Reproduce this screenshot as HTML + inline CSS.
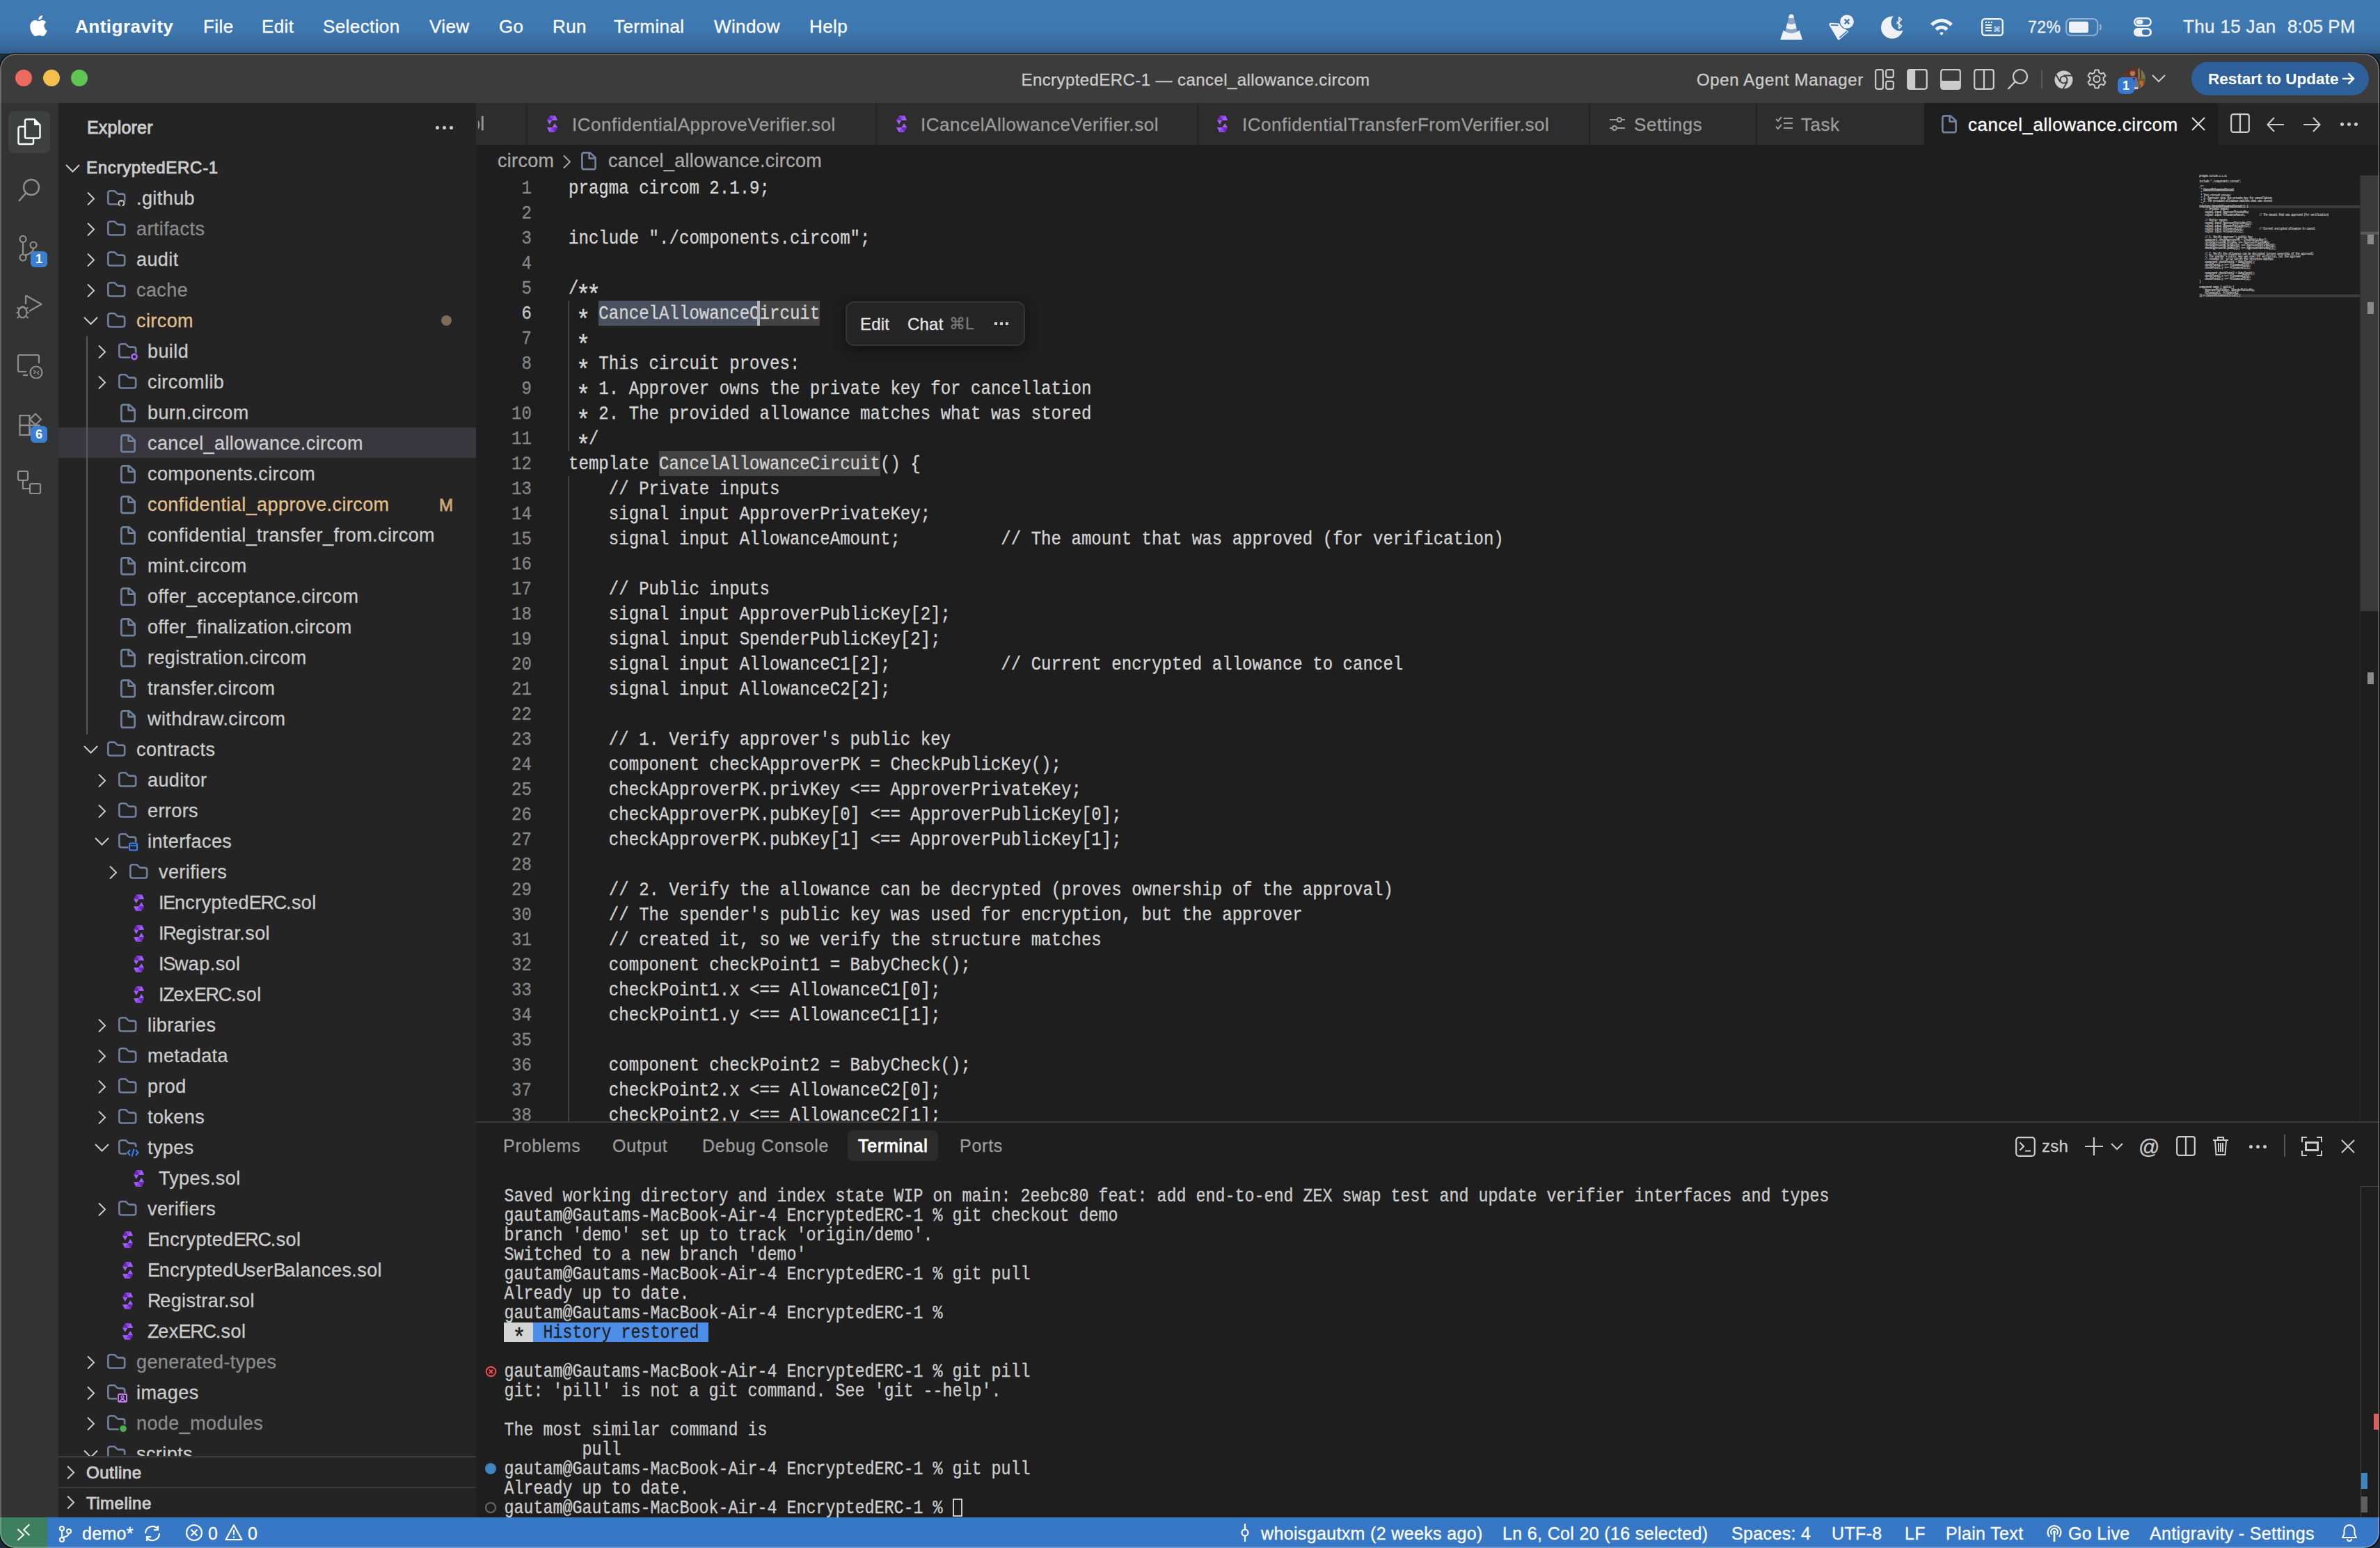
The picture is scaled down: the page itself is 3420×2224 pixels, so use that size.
<!DOCTYPE html><html><head><meta charset="utf-8"><style>html,body{margin:0;padding:0;}body{width:3420px;height:2224px;position:relative;overflow:hidden;background:#1a2c40;font-family:'Liberation Sans', sans-serif;}div,svg{box-sizing:border-box;}</style></head><body>
<div style="position:absolute;left:0;top:0;width:3420px;height:77px;background:linear-gradient(#407ab3 0%,#3e78b0 55%,#386a9e 86%,#2f5a88 100%);"></div>
<svg style="position:absolute;left:40px;top:20px;" width="28" height="33" viewBox="0 0 28 33" fill="none"><path fill="#fff" d="M23.2 17.5c0-3.6 3-5.4 3.1-5.5-1.7-2.5-4.3-2.8-5.3-2.9-2.2-.2-4.4 1.3-5.5 1.3-1.2 0-2.9-1.3-4.8-1.3C8.2 9.2 5.8 10.7 4.5 13c-2.7 4.6-.7 11.4 1.9 15.2 1.3 1.8 2.8 3.9 4.8 3.8 1.9-.1 2.7-1.2 5-1.2s3 1.2 5 1.2 3.3-1.9 4.5-3.7c1.4-2.1 2-4.1 2-4.2 0 0-3.9-1.5-4-6zM19.6 6.5c1-1.2 1.7-2.9 1.5-4.6-1.5.1-3.3 1-4.3 2.2-.9 1.1-1.8 2.8-1.5 4.5 1.6.1 3.3-.9 4.3-2.1z"/></svg>
<div style="position:absolute;left:108px;top:21.5px;height:33px;line-height:33px;font-size:26px;color:#fff;font-weight:700;letter-spacing:0.5px;white-space:pre;">Antigravity</div>
<div style="position:absolute;left:292px;top:21.5px;height:33px;line-height:33px;font-size:26px;color:#fff;font-weight:400;letter-spacing:0.4px;white-space:pre;-webkit-text-stroke:0.3px currentColor;">File</div>
<div style="position:absolute;left:376px;top:21.5px;height:33px;line-height:33px;font-size:26px;color:#fff;font-weight:400;letter-spacing:0.4px;white-space:pre;-webkit-text-stroke:0.3px currentColor;">Edit</div>
<div style="position:absolute;left:464px;top:21.5px;height:33px;line-height:33px;font-size:26px;color:#fff;font-weight:400;letter-spacing:0.4px;white-space:pre;-webkit-text-stroke:0.3px currentColor;">Selection</div>
<div style="position:absolute;left:617px;top:21.5px;height:33px;line-height:33px;font-size:26px;color:#fff;font-weight:400;letter-spacing:0.4px;white-space:pre;-webkit-text-stroke:0.3px currentColor;">View</div>
<div style="position:absolute;left:717px;top:21.5px;height:33px;line-height:33px;font-size:26px;color:#fff;font-weight:400;letter-spacing:0.4px;white-space:pre;-webkit-text-stroke:0.3px currentColor;">Go</div>
<div style="position:absolute;left:794px;top:21.5px;height:33px;line-height:33px;font-size:26px;color:#fff;font-weight:400;letter-spacing:0.4px;white-space:pre;-webkit-text-stroke:0.3px currentColor;">Run</div>
<div style="position:absolute;left:882px;top:21.5px;height:33px;line-height:33px;font-size:26px;color:#fff;font-weight:400;letter-spacing:0.4px;white-space:pre;-webkit-text-stroke:0.3px currentColor;">Terminal</div>
<div style="position:absolute;left:1026px;top:21.5px;height:33px;line-height:33px;font-size:26px;color:#fff;font-weight:400;letter-spacing:0.4px;white-space:pre;-webkit-text-stroke:0.3px currentColor;">Window</div>
<div style="position:absolute;left:1163px;top:21.5px;height:33px;line-height:33px;font-size:26px;color:#fff;font-weight:400;letter-spacing:0.4px;white-space:pre;-webkit-text-stroke:0.3px currentColor;">Help</div>
<div style="position:absolute;left:-2px;top:75.5px;width:3423px;height:2150px;border-radius:24px;background:#0c0c0c;"></div>
<div style="position:absolute;left:0;top:0;width:3420px;height:2224px;clip-path:inset(77px 1px 0px 0px round 22px);">
<div style="position:absolute;left:0px;top:77px;width:3420px;height:71px;background:#3c3c3c;"></div>
<div style="position:absolute;left:0px;top:77px;width:3420px;height:1px;background:#111111;"></div>
<div style="position:absolute;left:22px;top:100px;width:24px;height:24px;border-radius:50%;background:#ed6a5e;"></div>
<div style="position:absolute;left:62px;top:100px;width:24px;height:24px;border-radius:50%;background:#f5bf4f;"></div>
<div style="position:absolute;left:102px;top:100px;width:24px;height:24px;border-radius:50%;background:#61c554;"></div>
<div style="position:absolute;left:1718px;transform:translateX(-50%);top:98.5px;height:31px;line-height:31px;font-size:24px;color:#cccccc;font-weight:400;letter-spacing:0.42px;white-space:pre;-webkit-text-stroke:0.3px currentColor;">EncryptedERC-1 — cancel_allowance.circom</div>
<div style="position:absolute;left:0px;top:148px;width:84px;height:2032px;background:#333333;"></div>
<div style="position:absolute;left:84px;top:148px;width:600px;height:2032px;background:#242424;"></div>
<div style="position:absolute;left:684px;top:148px;width:2736px;height:60px;background:#252525;"></div>
<div style="position:absolute;left:684px;top:208px;width:2736px;height:1403px;background:#1e1e1e;"></div>
<div style="position:absolute;left:684px;top:1611px;width:2736px;height:569px;background:#1e1e1e;"></div>
<div style="position:absolute;left:684px;top:1611px;width:2736px;height:2px;background:#3a3a3a;"></div>
<div style="position:absolute;left:0px;top:2180px;width:3420px;height:44px;background:#3677c6;"></div>
<div style="position:absolute;left:0px;top:2180px;width:68px;height:44px;background:#3e7f60;"></div>
<div style="position:absolute;left:125px;top:167.0px;height:32px;line-height:32px;font-size:25px;color:#cccccc;font-weight:400;letter-spacing:0.2px;white-space:pre;-webkit-text-stroke:0.9px currentColor;">Explorer</div>
<div style="position:absolute;left:626px;top:181px;width:4.5px;height:4.5px;border-radius:50%;background:#cccccc"></div>
<div style="position:absolute;left:636px;top:181px;width:4.5px;height:4.5px;border-radius:50%;background:#cccccc"></div>
<div style="position:absolute;left:646px;top:181px;width:4.5px;height:4.5px;border-radius:50%;background:#cccccc"></div>
<svg style="position:absolute;left:94px;top:236px;" width="21" height="12" viewBox="0 0 21 12" fill="none"><polyline points="1,1 10.5,10.5 20,1" stroke="#cccccc" stroke-width="2"/></svg>
<div style="position:absolute;left:124px;top:224.5px;height:31px;line-height:31px;font-size:24px;color:#cccccc;font-weight:400;letter-spacing:0.7px;white-space:pre;-webkit-text-stroke:0.9px currentColor;">EncryptedERC-1</div>
<div style="position:absolute;left:84px;top:0;width:600px;height:2093px;overflow:hidden;">
</div>
<div style="position:absolute;left:0;top:0;width:3420px;height:2093px;clip-path:inset(148px 0 0 0);"><svg style="position:absolute;left:125px;top:275px;" width="12" height="21" viewBox="0 0 12 21" fill="none"><polyline points="1,1.5 10,10.5 1,19.5" stroke="#cccccc" stroke-width="2"/></svg><svg style="position:absolute;left:154px;top:273px;" width="30" height="26" viewBox="0 0 30 26" fill="none"><path d="M1.3 4.6 Q1.3 1.3 4.6 1.3 H9.5 Q10.8 1.3 11.8 2.3 L14 4.6 Q15 5.6 16.3 5.6 H21.9 Q25.2 5.6 25.2 8.9 V17.2 Q25.2 20.5 21.9 20.5 H4.6 Q1.3 20.5 1.3 17.2 Z" stroke="#71819c" stroke-width="2.6"/><circle cx="20.5" cy="19" r="5.6" fill="#242424"/><path d="M20.5 14.2a4.8 4.8 0 0 0-1.5 9.4c.2 0 .3-.1.3-.2v-.9c-1.3.3-1.6-.6-1.6-.6-.2-.6-.5-.7-.5-.7-.4-.3 0-.3 0-.3.5 0 .7.5.7.5.4.7 1.1.5 1.4.4 0-.3.2-.5.3-.6-1.1-.1-2.2-.5-2.2-2.3 0-.5.2-1 .5-1.3 0-.1-.2-.6 0-1.3 0 0 .4-.1 1.3.5a4.5 4.5 0 0 1 2.4 0c.9-.6 1.3-.5 1.3-.5.3.7.1 1.2 0 1.3.3.4.5.8.5 1.3 0 1.8-1.1 2.2-2.2 2.3.2.2.3.5.3.9v1.3c0 .1.1.3.3.2a4.8 4.8 0 0 0-1.5-9.4z" fill="#cccccc"/></svg><div style="position:absolute;left:196px;top:267.5px;height:35px;line-height:35px;font-size:27px;color:#cccccc;font-weight:400;letter-spacing:0.42px;white-space:pre;-webkit-text-stroke:0.3px currentColor;">.github</div><svg style="position:absolute;left:125px;top:319px;" width="12" height="21" viewBox="0 0 12 21" fill="none"><polyline points="1,1.5 10,10.5 1,19.5" stroke="#cccccc" stroke-width="2"/></svg><svg style="position:absolute;left:154px;top:317px;" width="30" height="26" viewBox="0 0 30 26" fill="none"><path d="M1.3 4.6 Q1.3 1.3 4.6 1.3 H9.5 Q10.8 1.3 11.8 2.3 L14 4.6 Q15 5.6 16.3 5.6 H21.9 Q25.2 5.6 25.2 8.9 V17.2 Q25.2 20.5 21.9 20.5 H4.6 Q1.3 20.5 1.3 17.2 Z" stroke="#71819c" stroke-width="2.6"/></svg><div style="position:absolute;left:196px;top:311.5px;height:35px;line-height:35px;font-size:27px;color:#8b8b8b;font-weight:400;letter-spacing:0.42px;white-space:pre;-webkit-text-stroke:0.3px currentColor;">artifacts</div><svg style="position:absolute;left:125px;top:363px;" width="12" height="21" viewBox="0 0 12 21" fill="none"><polyline points="1,1.5 10,10.5 1,19.5" stroke="#cccccc" stroke-width="2"/></svg><svg style="position:absolute;left:154px;top:361px;" width="30" height="26" viewBox="0 0 30 26" fill="none"><path d="M1.3 4.6 Q1.3 1.3 4.6 1.3 H9.5 Q10.8 1.3 11.8 2.3 L14 4.6 Q15 5.6 16.3 5.6 H21.9 Q25.2 5.6 25.2 8.9 V17.2 Q25.2 20.5 21.9 20.5 H4.6 Q1.3 20.5 1.3 17.2 Z" stroke="#71819c" stroke-width="2.6"/></svg><div style="position:absolute;left:196px;top:355.5px;height:35px;line-height:35px;font-size:27px;color:#cccccc;font-weight:400;letter-spacing:0.42px;white-space:pre;-webkit-text-stroke:0.3px currentColor;">audit</div><svg style="position:absolute;left:125px;top:407px;" width="12" height="21" viewBox="0 0 12 21" fill="none"><polyline points="1,1.5 10,10.5 1,19.5" stroke="#cccccc" stroke-width="2"/></svg><svg style="position:absolute;left:154px;top:405px;" width="30" height="26" viewBox="0 0 30 26" fill="none"><path d="M1.3 4.6 Q1.3 1.3 4.6 1.3 H9.5 Q10.8 1.3 11.8 2.3 L14 4.6 Q15 5.6 16.3 5.6 H21.9 Q25.2 5.6 25.2 8.9 V17.2 Q25.2 20.5 21.9 20.5 H4.6 Q1.3 20.5 1.3 17.2 Z" stroke="#71819c" stroke-width="2.6"/></svg><div style="position:absolute;left:196px;top:399.5px;height:35px;line-height:35px;font-size:27px;color:#8b8b8b;font-weight:400;letter-spacing:0.42px;white-space:pre;-webkit-text-stroke:0.3px currentColor;">cache</div><svg style="position:absolute;left:120px;top:455px;" width="21" height="12" viewBox="0 0 21 12" fill="none"><polyline points="1,1 10.5,10.5 20,1" stroke="#cccccc" stroke-width="2"/></svg><svg style="position:absolute;left:154px;top:449px;" width="30" height="26" viewBox="0 0 30 26" fill="none"><path d="M1.3 4.6 Q1.3 1.3 4.6 1.3 H9.5 Q10.8 1.3 11.8 2.3 L14 4.6 Q15 5.6 16.3 5.6 H21.9 Q25.2 5.6 25.2 8.9 V17.2 Q25.2 20.5 21.9 20.5 H4.6 Q1.3 20.5 1.3 17.2 Z" stroke="#71819c" stroke-width="2.6"/></svg><div style="position:absolute;left:196px;top:443.5px;height:35px;line-height:35px;font-size:27px;color:#e2c08d;font-weight:400;letter-spacing:0.42px;white-space:pre;-webkit-text-stroke:0.3px currentColor;">circom</div><div style="position:absolute;left:634px;top:453px;width:15px;height:15px;border-radius:50%;background:#7c6c58"></div><svg style="position:absolute;left:141px;top:495px;" width="12" height="21" viewBox="0 0 12 21" fill="none"><polyline points="1,1.5 10,10.5 1,19.5" stroke="#cccccc" stroke-width="2"/></svg><svg style="position:absolute;left:170px;top:493px;" width="30" height="26" viewBox="0 0 30 26" fill="none"><path d="M1.3 4.6 Q1.3 1.3 4.6 1.3 H9.5 Q10.8 1.3 11.8 2.3 L14 4.6 Q15 5.6 16.3 5.6 H21.9 Q25.2 5.6 25.2 8.9 V17.2 Q25.2 20.5 21.9 20.5 H4.6 Q1.3 20.5 1.3 17.2 Z" stroke="#71819c" stroke-width="2.6"/><circle cx="23" cy="19.5" r="6" fill="#242424"/><circle cx="23" cy="19.5" r="3.6" stroke="#9a6cf0" stroke-width="2.6"/></svg><div style="position:absolute;left:212px;top:487.5px;height:35px;line-height:35px;font-size:27px;color:#cccccc;font-weight:400;letter-spacing:0.42px;white-space:pre;-webkit-text-stroke:0.3px currentColor;">build</div><svg style="position:absolute;left:141px;top:539px;" width="12" height="21" viewBox="0 0 12 21" fill="none"><polyline points="1,1.5 10,10.5 1,19.5" stroke="#cccccc" stroke-width="2"/></svg><svg style="position:absolute;left:170px;top:537px;" width="30" height="26" viewBox="0 0 30 26" fill="none"><path d="M1.3 4.6 Q1.3 1.3 4.6 1.3 H9.5 Q10.8 1.3 11.8 2.3 L14 4.6 Q15 5.6 16.3 5.6 H21.9 Q25.2 5.6 25.2 8.9 V17.2 Q25.2 20.5 21.9 20.5 H4.6 Q1.3 20.5 1.3 17.2 Z" stroke="#71819c" stroke-width="2.6"/></svg><div style="position:absolute;left:212px;top:531.5px;height:35px;line-height:35px;font-size:27px;color:#cccccc;font-weight:400;letter-spacing:0.42px;white-space:pre;-webkit-text-stroke:0.3px currentColor;">circomlib</div><svg style="position:absolute;left:173px;top:580px;" width="22" height="27" viewBox="0 0 22 27" fill="none"><path d="M4.4 1.4 H12.8 L20.6 8.6 V22.4 Q20.6 25.2 17.8 25.2 H4.2 Q1.4 25.2 1.4 22.4 V4.4 Q1.4 1.4 4.4 1.4 Z M11.6 1.4 V9.6 H20.6" stroke="#71819c" stroke-width="2.7" stroke-linejoin="round"/></svg><div style="position:absolute;left:212px;top:575.5px;height:35px;line-height:35px;font-size:27px;color:#cccccc;font-weight:400;letter-spacing:0.42px;white-space:pre;-webkit-text-stroke:0.3px currentColor;">burn.circom</div><div style="position:absolute;left:84px;top:614px;width:600px;height:44px;background:#37373d;"></div><svg style="position:absolute;left:173px;top:624px;" width="22" height="27" viewBox="0 0 22 27" fill="none"><path d="M4.4 1.4 H12.8 L20.6 8.6 V22.4 Q20.6 25.2 17.8 25.2 H4.2 Q1.4 25.2 1.4 22.4 V4.4 Q1.4 1.4 4.4 1.4 Z M11.6 1.4 V9.6 H20.6" stroke="#71819c" stroke-width="2.7" stroke-linejoin="round"/></svg><div style="position:absolute;left:212px;top:619.5px;height:35px;line-height:35px;font-size:27px;color:#cccccc;font-weight:400;letter-spacing:0.42px;white-space:pre;-webkit-text-stroke:0.3px currentColor;">cancel_allowance.circom</div><svg style="position:absolute;left:173px;top:668px;" width="22" height="27" viewBox="0 0 22 27" fill="none"><path d="M4.4 1.4 H12.8 L20.6 8.6 V22.4 Q20.6 25.2 17.8 25.2 H4.2 Q1.4 25.2 1.4 22.4 V4.4 Q1.4 1.4 4.4 1.4 Z M11.6 1.4 V9.6 H20.6" stroke="#71819c" stroke-width="2.7" stroke-linejoin="round"/></svg><div style="position:absolute;left:212px;top:663.5px;height:35px;line-height:35px;font-size:27px;color:#cccccc;font-weight:400;letter-spacing:0.42px;white-space:pre;-webkit-text-stroke:0.3px currentColor;">components.circom</div><svg style="position:absolute;left:173px;top:712px;" width="22" height="27" viewBox="0 0 22 27" fill="none"><path d="M4.4 1.4 H12.8 L20.6 8.6 V22.4 Q20.6 25.2 17.8 25.2 H4.2 Q1.4 25.2 1.4 22.4 V4.4 Q1.4 1.4 4.4 1.4 Z M11.6 1.4 V9.6 H20.6" stroke="#71819c" stroke-width="2.7" stroke-linejoin="round"/></svg><div style="position:absolute;left:212px;top:707.5px;height:35px;line-height:35px;font-size:27px;color:#e2c08d;font-weight:400;letter-spacing:0.42px;white-space:pre;-webkit-text-stroke:0.3px currentColor;">confidential_approve.circom</div><div style="position:absolute;left:631px;top:709.5px;height:31px;line-height:31px;font-size:24px;color:#c9a77a;font-weight:400;letter-spacing:0px;white-space:pre;-webkit-text-stroke:0.9px currentColor;">M</div><svg style="position:absolute;left:173px;top:756px;" width="22" height="27" viewBox="0 0 22 27" fill="none"><path d="M4.4 1.4 H12.8 L20.6 8.6 V22.4 Q20.6 25.2 17.8 25.2 H4.2 Q1.4 25.2 1.4 22.4 V4.4 Q1.4 1.4 4.4 1.4 Z M11.6 1.4 V9.6 H20.6" stroke="#71819c" stroke-width="2.7" stroke-linejoin="round"/></svg><div style="position:absolute;left:212px;top:751.5px;height:35px;line-height:35px;font-size:27px;color:#cccccc;font-weight:400;letter-spacing:0.42px;white-space:pre;-webkit-text-stroke:0.3px currentColor;">confidential_transfer_from.circom</div><svg style="position:absolute;left:173px;top:800px;" width="22" height="27" viewBox="0 0 22 27" fill="none"><path d="M4.4 1.4 H12.8 L20.6 8.6 V22.4 Q20.6 25.2 17.8 25.2 H4.2 Q1.4 25.2 1.4 22.4 V4.4 Q1.4 1.4 4.4 1.4 Z M11.6 1.4 V9.6 H20.6" stroke="#71819c" stroke-width="2.7" stroke-linejoin="round"/></svg><div style="position:absolute;left:212px;top:795.5px;height:35px;line-height:35px;font-size:27px;color:#cccccc;font-weight:400;letter-spacing:0.42px;white-space:pre;-webkit-text-stroke:0.3px currentColor;">mint.circom</div><svg style="position:absolute;left:173px;top:844px;" width="22" height="27" viewBox="0 0 22 27" fill="none"><path d="M4.4 1.4 H12.8 L20.6 8.6 V22.4 Q20.6 25.2 17.8 25.2 H4.2 Q1.4 25.2 1.4 22.4 V4.4 Q1.4 1.4 4.4 1.4 Z M11.6 1.4 V9.6 H20.6" stroke="#71819c" stroke-width="2.7" stroke-linejoin="round"/></svg><div style="position:absolute;left:212px;top:839.5px;height:35px;line-height:35px;font-size:27px;color:#cccccc;font-weight:400;letter-spacing:0.42px;white-space:pre;-webkit-text-stroke:0.3px currentColor;">offer_acceptance.circom</div><svg style="position:absolute;left:173px;top:888px;" width="22" height="27" viewBox="0 0 22 27" fill="none"><path d="M4.4 1.4 H12.8 L20.6 8.6 V22.4 Q20.6 25.2 17.8 25.2 H4.2 Q1.4 25.2 1.4 22.4 V4.4 Q1.4 1.4 4.4 1.4 Z M11.6 1.4 V9.6 H20.6" stroke="#71819c" stroke-width="2.7" stroke-linejoin="round"/></svg><div style="position:absolute;left:212px;top:883.5px;height:35px;line-height:35px;font-size:27px;color:#cccccc;font-weight:400;letter-spacing:0.42px;white-space:pre;-webkit-text-stroke:0.3px currentColor;">offer_finalization.circom</div><svg style="position:absolute;left:173px;top:932px;" width="22" height="27" viewBox="0 0 22 27" fill="none"><path d="M4.4 1.4 H12.8 L20.6 8.6 V22.4 Q20.6 25.2 17.8 25.2 H4.2 Q1.4 25.2 1.4 22.4 V4.4 Q1.4 1.4 4.4 1.4 Z M11.6 1.4 V9.6 H20.6" stroke="#71819c" stroke-width="2.7" stroke-linejoin="round"/></svg><div style="position:absolute;left:212px;top:927.5px;height:35px;line-height:35px;font-size:27px;color:#cccccc;font-weight:400;letter-spacing:0.42px;white-space:pre;-webkit-text-stroke:0.3px currentColor;">registration.circom</div><svg style="position:absolute;left:173px;top:976px;" width="22" height="27" viewBox="0 0 22 27" fill="none"><path d="M4.4 1.4 H12.8 L20.6 8.6 V22.4 Q20.6 25.2 17.8 25.2 H4.2 Q1.4 25.2 1.4 22.4 V4.4 Q1.4 1.4 4.4 1.4 Z M11.6 1.4 V9.6 H20.6" stroke="#71819c" stroke-width="2.7" stroke-linejoin="round"/></svg><div style="position:absolute;left:212px;top:971.5px;height:35px;line-height:35px;font-size:27px;color:#cccccc;font-weight:400;letter-spacing:0.42px;white-space:pre;-webkit-text-stroke:0.3px currentColor;">transfer.circom</div><svg style="position:absolute;left:173px;top:1020px;" width="22" height="27" viewBox="0 0 22 27" fill="none"><path d="M4.4 1.4 H12.8 L20.6 8.6 V22.4 Q20.6 25.2 17.8 25.2 H4.2 Q1.4 25.2 1.4 22.4 V4.4 Q1.4 1.4 4.4 1.4 Z M11.6 1.4 V9.6 H20.6" stroke="#71819c" stroke-width="2.7" stroke-linejoin="round"/></svg><div style="position:absolute;left:212px;top:1015.5px;height:35px;line-height:35px;font-size:27px;color:#cccccc;font-weight:400;letter-spacing:0.42px;white-space:pre;-webkit-text-stroke:0.3px currentColor;">withdraw.circom</div><svg style="position:absolute;left:120px;top:1071px;" width="21" height="12" viewBox="0 0 21 12" fill="none"><polyline points="1,1 10.5,10.5 20,1" stroke="#cccccc" stroke-width="2"/></svg><svg style="position:absolute;left:154px;top:1065px;" width="30" height="26" viewBox="0 0 30 26" fill="none"><path d="M1.3 4.6 Q1.3 1.3 4.6 1.3 H9.5 Q10.8 1.3 11.8 2.3 L14 4.6 Q15 5.6 16.3 5.6 H21.9 Q25.2 5.6 25.2 8.9 V17.2 Q25.2 20.5 21.9 20.5 H4.6 Q1.3 20.5 1.3 17.2 Z" stroke="#71819c" stroke-width="2.6"/></svg><div style="position:absolute;left:196px;top:1059.5px;height:35px;line-height:35px;font-size:27px;color:#cccccc;font-weight:400;letter-spacing:0.42px;white-space:pre;-webkit-text-stroke:0.3px currentColor;">contracts</div><svg style="position:absolute;left:141px;top:1111px;" width="12" height="21" viewBox="0 0 12 21" fill="none"><polyline points="1,1.5 10,10.5 1,19.5" stroke="#cccccc" stroke-width="2"/></svg><svg style="position:absolute;left:170px;top:1109px;" width="30" height="26" viewBox="0 0 30 26" fill="none"><path d="M1.3 4.6 Q1.3 1.3 4.6 1.3 H9.5 Q10.8 1.3 11.8 2.3 L14 4.6 Q15 5.6 16.3 5.6 H21.9 Q25.2 5.6 25.2 8.9 V17.2 Q25.2 20.5 21.9 20.5 H4.6 Q1.3 20.5 1.3 17.2 Z" stroke="#71819c" stroke-width="2.6"/></svg><div style="position:absolute;left:212px;top:1103.5px;height:35px;line-height:35px;font-size:27px;color:#cccccc;font-weight:400;letter-spacing:0.42px;white-space:pre;-webkit-text-stroke:0.3px currentColor;">auditor</div><svg style="position:absolute;left:141px;top:1155px;" width="12" height="21" viewBox="0 0 12 21" fill="none"><polyline points="1,1.5 10,10.5 1,19.5" stroke="#cccccc" stroke-width="2"/></svg><svg style="position:absolute;left:170px;top:1153px;" width="30" height="26" viewBox="0 0 30 26" fill="none"><path d="M1.3 4.6 Q1.3 1.3 4.6 1.3 H9.5 Q10.8 1.3 11.8 2.3 L14 4.6 Q15 5.6 16.3 5.6 H21.9 Q25.2 5.6 25.2 8.9 V17.2 Q25.2 20.5 21.9 20.5 H4.6 Q1.3 20.5 1.3 17.2 Z" stroke="#71819c" stroke-width="2.6"/></svg><div style="position:absolute;left:212px;top:1147.5px;height:35px;line-height:35px;font-size:27px;color:#cccccc;font-weight:400;letter-spacing:0.42px;white-space:pre;-webkit-text-stroke:0.3px currentColor;">errors</div><svg style="position:absolute;left:136px;top:1203px;" width="21" height="12" viewBox="0 0 21 12" fill="none"><polyline points="1,1 10.5,10.5 20,1" stroke="#cccccc" stroke-width="2"/></svg><svg style="position:absolute;left:170px;top:1197px;" width="30" height="26" viewBox="0 0 30 26" fill="none"><path d="M1.3 4.6 Q1.3 1.3 4.6 1.3 H9.5 Q10.8 1.3 11.8 2.3 L14 4.6 Q15 5.6 16.3 5.6 H21.9 Q25.2 5.6 25.2 8.9 V17.2 Q25.2 20.5 21.9 20.5 H4.6 Q1.3 20.5 1.3 17.2 Z" stroke="#71819c" stroke-width="2.6"/><rect x="14.5" y="13" width="14" height="13" fill="#242424"/><rect x="16" y="14.5" width="11" height="10" rx="1.5" stroke="#3b82f6" stroke-width="2"/><line x1="16" y1="18" x2="27" y2="18" stroke="#3b82f6" stroke-width="1.5"/></svg><div style="position:absolute;left:212px;top:1191.5px;height:35px;line-height:35px;font-size:27px;color:#cccccc;font-weight:400;letter-spacing:0.42px;white-space:pre;-webkit-text-stroke:0.3px currentColor;">interfaces</div><svg style="position:absolute;left:157px;top:1243px;" width="12" height="21" viewBox="0 0 12 21" fill="none"><polyline points="1,1.5 10,10.5 1,19.5" stroke="#cccccc" stroke-width="2"/></svg><svg style="position:absolute;left:186px;top:1241px;" width="30" height="26" viewBox="0 0 30 26" fill="none"><path d="M1.3 4.6 Q1.3 1.3 4.6 1.3 H9.5 Q10.8 1.3 11.8 2.3 L14 4.6 Q15 5.6 16.3 5.6 H21.9 Q25.2 5.6 25.2 8.9 V17.2 Q25.2 20.5 21.9 20.5 H4.6 Q1.3 20.5 1.3 17.2 Z" stroke="#71819c" stroke-width="2.6"/></svg><div style="position:absolute;left:228px;top:1235.5px;height:35px;line-height:35px;font-size:27px;color:#cccccc;font-weight:400;letter-spacing:0.42px;white-space:pre;-webkit-text-stroke:0.3px currentColor;">verifiers</div><svg style="position:absolute;left:192px;top:1285px;" width="15" height="24" viewBox="0 0 15 24" fill="none"><polygon points="4,0 11.8,0 15,6.8 7.3,6.8" fill="#8a45e0"/><polygon points="11.8,0 15,6.8 7.3,6.8" fill="#a35ef7"/><polygon points="4,0 7.3,6.8 0,6.6" fill="#6a2bbd"/><polygon points="0,6.6 7.3,6.8 3.8,13" fill="#a35ef7"/><polygon points="11.2,11 15,17.3 7.4,17.3" fill="#a35ef7"/><polygon points="0,17.3 15,17.3 11.3,24 3.7,24" fill="#8a45e0"/><polygon points="0,17.3 7.4,17.3 3.7,24" fill="#a35ef7"/><polygon points="7.4,17.3 15,17.3 11.3,24" fill="#6a2bbd"/></svg><div style="position:absolute;left:228px;top:1279.5px;height:35px;line-height:35px;font-size:27px;color:#cccccc;font-weight:400;letter-spacing:0.42px;white-space:pre;-webkit-text-stroke:0.3px currentColor;"><span style="letter-spacing:-1.3px">I</span><span style="letter-spacing:-1.3px">E</span>ncrypted<span style="letter-spacing:-1.3px">E</span><span style="letter-spacing:-1.3px">R</span><span style="letter-spacing:-1.3px">C</span>.sol</div><svg style="position:absolute;left:192px;top:1329px;" width="15" height="24" viewBox="0 0 15 24" fill="none"><polygon points="4,0 11.8,0 15,6.8 7.3,6.8" fill="#8a45e0"/><polygon points="11.8,0 15,6.8 7.3,6.8" fill="#a35ef7"/><polygon points="4,0 7.3,6.8 0,6.6" fill="#6a2bbd"/><polygon points="0,6.6 7.3,6.8 3.8,13" fill="#a35ef7"/><polygon points="11.2,11 15,17.3 7.4,17.3" fill="#a35ef7"/><polygon points="0,17.3 15,17.3 11.3,24 3.7,24" fill="#8a45e0"/><polygon points="0,17.3 7.4,17.3 3.7,24" fill="#a35ef7"/><polygon points="7.4,17.3 15,17.3 11.3,24" fill="#6a2bbd"/></svg><div style="position:absolute;left:228px;top:1323.5px;height:35px;line-height:35px;font-size:27px;color:#cccccc;font-weight:400;letter-spacing:0.42px;white-space:pre;-webkit-text-stroke:0.3px currentColor;"><span style="letter-spacing:-1.3px">I</span><span style="letter-spacing:-1.3px">R</span>egistrar.sol</div><svg style="position:absolute;left:192px;top:1373px;" width="15" height="24" viewBox="0 0 15 24" fill="none"><polygon points="4,0 11.8,0 15,6.8 7.3,6.8" fill="#8a45e0"/><polygon points="11.8,0 15,6.8 7.3,6.8" fill="#a35ef7"/><polygon points="4,0 7.3,6.8 0,6.6" fill="#6a2bbd"/><polygon points="0,6.6 7.3,6.8 3.8,13" fill="#a35ef7"/><polygon points="11.2,11 15,17.3 7.4,17.3" fill="#a35ef7"/><polygon points="0,17.3 15,17.3 11.3,24 3.7,24" fill="#8a45e0"/><polygon points="0,17.3 7.4,17.3 3.7,24" fill="#a35ef7"/><polygon points="7.4,17.3 15,17.3 11.3,24" fill="#6a2bbd"/></svg><div style="position:absolute;left:228px;top:1367.5px;height:35px;line-height:35px;font-size:27px;color:#cccccc;font-weight:400;letter-spacing:0.42px;white-space:pre;-webkit-text-stroke:0.3px currentColor;"><span style="letter-spacing:-1.3px">I</span><span style="letter-spacing:-1.3px">S</span>wap.sol</div><svg style="position:absolute;left:192px;top:1417px;" width="15" height="24" viewBox="0 0 15 24" fill="none"><polygon points="4,0 11.8,0 15,6.8 7.3,6.8" fill="#8a45e0"/><polygon points="11.8,0 15,6.8 7.3,6.8" fill="#a35ef7"/><polygon points="4,0 7.3,6.8 0,6.6" fill="#6a2bbd"/><polygon points="0,6.6 7.3,6.8 3.8,13" fill="#a35ef7"/><polygon points="11.2,11 15,17.3 7.4,17.3" fill="#a35ef7"/><polygon points="0,17.3 15,17.3 11.3,24 3.7,24" fill="#8a45e0"/><polygon points="0,17.3 7.4,17.3 3.7,24" fill="#a35ef7"/><polygon points="7.4,17.3 15,17.3 11.3,24" fill="#6a2bbd"/></svg><div style="position:absolute;left:228px;top:1411.5px;height:35px;line-height:35px;font-size:27px;color:#cccccc;font-weight:400;letter-spacing:0.42px;white-space:pre;-webkit-text-stroke:0.3px currentColor;"><span style="letter-spacing:-1.3px">I</span><span style="letter-spacing:-1.3px">Z</span>ex<span style="letter-spacing:-1.3px">E</span><span style="letter-spacing:-1.3px">R</span><span style="letter-spacing:-1.3px">C</span>.sol</div><svg style="position:absolute;left:141px;top:1463px;" width="12" height="21" viewBox="0 0 12 21" fill="none"><polyline points="1,1.5 10,10.5 1,19.5" stroke="#cccccc" stroke-width="2"/></svg><svg style="position:absolute;left:170px;top:1461px;" width="30" height="26" viewBox="0 0 30 26" fill="none"><path d="M1.3 4.6 Q1.3 1.3 4.6 1.3 H9.5 Q10.8 1.3 11.8 2.3 L14 4.6 Q15 5.6 16.3 5.6 H21.9 Q25.2 5.6 25.2 8.9 V17.2 Q25.2 20.5 21.9 20.5 H4.6 Q1.3 20.5 1.3 17.2 Z" stroke="#71819c" stroke-width="2.6"/></svg><div style="position:absolute;left:212px;top:1455.5px;height:35px;line-height:35px;font-size:27px;color:#cccccc;font-weight:400;letter-spacing:0.42px;white-space:pre;-webkit-text-stroke:0.3px currentColor;">libraries</div><svg style="position:absolute;left:141px;top:1507px;" width="12" height="21" viewBox="0 0 12 21" fill="none"><polyline points="1,1.5 10,10.5 1,19.5" stroke="#cccccc" stroke-width="2"/></svg><svg style="position:absolute;left:170px;top:1505px;" width="30" height="26" viewBox="0 0 30 26" fill="none"><path d="M1.3 4.6 Q1.3 1.3 4.6 1.3 H9.5 Q10.8 1.3 11.8 2.3 L14 4.6 Q15 5.6 16.3 5.6 H21.9 Q25.2 5.6 25.2 8.9 V17.2 Q25.2 20.5 21.9 20.5 H4.6 Q1.3 20.5 1.3 17.2 Z" stroke="#71819c" stroke-width="2.6"/></svg><div style="position:absolute;left:212px;top:1499.5px;height:35px;line-height:35px;font-size:27px;color:#cccccc;font-weight:400;letter-spacing:0.42px;white-space:pre;-webkit-text-stroke:0.3px currentColor;">metadata</div><svg style="position:absolute;left:141px;top:1551px;" width="12" height="21" viewBox="0 0 12 21" fill="none"><polyline points="1,1.5 10,10.5 1,19.5" stroke="#cccccc" stroke-width="2"/></svg><svg style="position:absolute;left:170px;top:1549px;" width="30" height="26" viewBox="0 0 30 26" fill="none"><path d="M1.3 4.6 Q1.3 1.3 4.6 1.3 H9.5 Q10.8 1.3 11.8 2.3 L14 4.6 Q15 5.6 16.3 5.6 H21.9 Q25.2 5.6 25.2 8.9 V17.2 Q25.2 20.5 21.9 20.5 H4.6 Q1.3 20.5 1.3 17.2 Z" stroke="#71819c" stroke-width="2.6"/></svg><div style="position:absolute;left:212px;top:1543.5px;height:35px;line-height:35px;font-size:27px;color:#cccccc;font-weight:400;letter-spacing:0.42px;white-space:pre;-webkit-text-stroke:0.3px currentColor;">prod</div><svg style="position:absolute;left:141px;top:1595px;" width="12" height="21" viewBox="0 0 12 21" fill="none"><polyline points="1,1.5 10,10.5 1,19.5" stroke="#cccccc" stroke-width="2"/></svg><svg style="position:absolute;left:170px;top:1593px;" width="30" height="26" viewBox="0 0 30 26" fill="none"><path d="M1.3 4.6 Q1.3 1.3 4.6 1.3 H9.5 Q10.8 1.3 11.8 2.3 L14 4.6 Q15 5.6 16.3 5.6 H21.9 Q25.2 5.6 25.2 8.9 V17.2 Q25.2 20.5 21.9 20.5 H4.6 Q1.3 20.5 1.3 17.2 Z" stroke="#71819c" stroke-width="2.6"/></svg><div style="position:absolute;left:212px;top:1587.5px;height:35px;line-height:35px;font-size:27px;color:#cccccc;font-weight:400;letter-spacing:0.42px;white-space:pre;-webkit-text-stroke:0.3px currentColor;">tokens</div><svg style="position:absolute;left:136px;top:1643px;" width="21" height="12" viewBox="0 0 21 12" fill="none"><polyline points="1,1 10.5,10.5 20,1" stroke="#cccccc" stroke-width="2"/></svg><svg style="position:absolute;left:170px;top:1637px;" width="30" height="26" viewBox="0 0 30 26" fill="none"><path d="M1.3 4.6 Q1.3 1.3 4.6 1.3 H9.5 Q10.8 1.3 11.8 2.3 L14 4.6 Q15 5.6 16.3 5.6 H21.9 Q25.2 5.6 25.2 8.9 V17.2 Q25.2 20.5 21.9 20.5 H4.6 Q1.3 20.5 1.3 17.2 Z" stroke="#71819c" stroke-width="2.6"/><rect x="12" y="11" width="18" height="15" fill="#242424"/><path d="M17 15 L13.5 19 L17 23 M25 15 L28.5 19 L25 23 M22.5 13.5 L19.5 24.5" stroke="#3b82f6" stroke-width="2"/></svg><div style="position:absolute;left:212px;top:1631.5px;height:35px;line-height:35px;font-size:27px;color:#cccccc;font-weight:400;letter-spacing:0.42px;white-space:pre;-webkit-text-stroke:0.3px currentColor;">types</div><svg style="position:absolute;left:192px;top:1681px;" width="15" height="24" viewBox="0 0 15 24" fill="none"><polygon points="4,0 11.8,0 15,6.8 7.3,6.8" fill="#8a45e0"/><polygon points="11.8,0 15,6.8 7.3,6.8" fill="#a35ef7"/><polygon points="4,0 7.3,6.8 0,6.6" fill="#6a2bbd"/><polygon points="0,6.6 7.3,6.8 3.8,13" fill="#a35ef7"/><polygon points="11.2,11 15,17.3 7.4,17.3" fill="#a35ef7"/><polygon points="0,17.3 15,17.3 11.3,24 3.7,24" fill="#8a45e0"/><polygon points="0,17.3 7.4,17.3 3.7,24" fill="#a35ef7"/><polygon points="7.4,17.3 15,17.3 11.3,24" fill="#6a2bbd"/></svg><div style="position:absolute;left:228px;top:1675.5px;height:35px;line-height:35px;font-size:27px;color:#cccccc;font-weight:400;letter-spacing:0.42px;white-space:pre;-webkit-text-stroke:0.3px currentColor;"><span style="letter-spacing:-1.3px">T</span>ypes.sol</div><svg style="position:absolute;left:141px;top:1727px;" width="12" height="21" viewBox="0 0 12 21" fill="none"><polyline points="1,1.5 10,10.5 1,19.5" stroke="#cccccc" stroke-width="2"/></svg><svg style="position:absolute;left:170px;top:1725px;" width="30" height="26" viewBox="0 0 30 26" fill="none"><path d="M1.3 4.6 Q1.3 1.3 4.6 1.3 H9.5 Q10.8 1.3 11.8 2.3 L14 4.6 Q15 5.6 16.3 5.6 H21.9 Q25.2 5.6 25.2 8.9 V17.2 Q25.2 20.5 21.9 20.5 H4.6 Q1.3 20.5 1.3 17.2 Z" stroke="#71819c" stroke-width="2.6"/></svg><div style="position:absolute;left:212px;top:1719.5px;height:35px;line-height:35px;font-size:27px;color:#cccccc;font-weight:400;letter-spacing:0.42px;white-space:pre;-webkit-text-stroke:0.3px currentColor;">verifiers</div><svg style="position:absolute;left:176px;top:1769px;" width="15" height="24" viewBox="0 0 15 24" fill="none"><polygon points="4,0 11.8,0 15,6.8 7.3,6.8" fill="#8a45e0"/><polygon points="11.8,0 15,6.8 7.3,6.8" fill="#a35ef7"/><polygon points="4,0 7.3,6.8 0,6.6" fill="#6a2bbd"/><polygon points="0,6.6 7.3,6.8 3.8,13" fill="#a35ef7"/><polygon points="11.2,11 15,17.3 7.4,17.3" fill="#a35ef7"/><polygon points="0,17.3 15,17.3 11.3,24 3.7,24" fill="#8a45e0"/><polygon points="0,17.3 7.4,17.3 3.7,24" fill="#a35ef7"/><polygon points="7.4,17.3 15,17.3 11.3,24" fill="#6a2bbd"/></svg><div style="position:absolute;left:212px;top:1763.5px;height:35px;line-height:35px;font-size:27px;color:#cccccc;font-weight:400;letter-spacing:0.42px;white-space:pre;-webkit-text-stroke:0.3px currentColor;"><span style="letter-spacing:-1.3px">E</span>ncrypted<span style="letter-spacing:-1.3px">E</span><span style="letter-spacing:-1.3px">R</span><span style="letter-spacing:-1.3px">C</span>.sol</div><svg style="position:absolute;left:176px;top:1813px;" width="15" height="24" viewBox="0 0 15 24" fill="none"><polygon points="4,0 11.8,0 15,6.8 7.3,6.8" fill="#8a45e0"/><polygon points="11.8,0 15,6.8 7.3,6.8" fill="#a35ef7"/><polygon points="4,0 7.3,6.8 0,6.6" fill="#6a2bbd"/><polygon points="0,6.6 7.3,6.8 3.8,13" fill="#a35ef7"/><polygon points="11.2,11 15,17.3 7.4,17.3" fill="#a35ef7"/><polygon points="0,17.3 15,17.3 11.3,24 3.7,24" fill="#8a45e0"/><polygon points="0,17.3 7.4,17.3 3.7,24" fill="#a35ef7"/><polygon points="7.4,17.3 15,17.3 11.3,24" fill="#6a2bbd"/></svg><div style="position:absolute;left:212px;top:1807.5px;height:35px;line-height:35px;font-size:27px;color:#cccccc;font-weight:400;letter-spacing:0.42px;white-space:pre;-webkit-text-stroke:0.3px currentColor;"><span style="letter-spacing:-1.3px">E</span>ncrypted<span style="letter-spacing:-1.3px">U</span>ser<span style="letter-spacing:-1.3px">B</span>alances.sol</div><svg style="position:absolute;left:176px;top:1857px;" width="15" height="24" viewBox="0 0 15 24" fill="none"><polygon points="4,0 11.8,0 15,6.8 7.3,6.8" fill="#8a45e0"/><polygon points="11.8,0 15,6.8 7.3,6.8" fill="#a35ef7"/><polygon points="4,0 7.3,6.8 0,6.6" fill="#6a2bbd"/><polygon points="0,6.6 7.3,6.8 3.8,13" fill="#a35ef7"/><polygon points="11.2,11 15,17.3 7.4,17.3" fill="#a35ef7"/><polygon points="0,17.3 15,17.3 11.3,24 3.7,24" fill="#8a45e0"/><polygon points="0,17.3 7.4,17.3 3.7,24" fill="#a35ef7"/><polygon points="7.4,17.3 15,17.3 11.3,24" fill="#6a2bbd"/></svg><div style="position:absolute;left:212px;top:1851.5px;height:35px;line-height:35px;font-size:27px;color:#cccccc;font-weight:400;letter-spacing:0.42px;white-space:pre;-webkit-text-stroke:0.3px currentColor;"><span style="letter-spacing:-1.3px">R</span>egistrar.sol</div><svg style="position:absolute;left:176px;top:1901px;" width="15" height="24" viewBox="0 0 15 24" fill="none"><polygon points="4,0 11.8,0 15,6.8 7.3,6.8" fill="#8a45e0"/><polygon points="11.8,0 15,6.8 7.3,6.8" fill="#a35ef7"/><polygon points="4,0 7.3,6.8 0,6.6" fill="#6a2bbd"/><polygon points="0,6.6 7.3,6.8 3.8,13" fill="#a35ef7"/><polygon points="11.2,11 15,17.3 7.4,17.3" fill="#a35ef7"/><polygon points="0,17.3 15,17.3 11.3,24 3.7,24" fill="#8a45e0"/><polygon points="0,17.3 7.4,17.3 3.7,24" fill="#a35ef7"/><polygon points="7.4,17.3 15,17.3 11.3,24" fill="#6a2bbd"/></svg><div style="position:absolute;left:212px;top:1895.5px;height:35px;line-height:35px;font-size:27px;color:#cccccc;font-weight:400;letter-spacing:0.42px;white-space:pre;-webkit-text-stroke:0.3px currentColor;"><span style="letter-spacing:-1.3px">Z</span>ex<span style="letter-spacing:-1.3px">E</span><span style="letter-spacing:-1.3px">R</span><span style="letter-spacing:-1.3px">C</span>.sol</div><svg style="position:absolute;left:125px;top:1947px;" width="12" height="21" viewBox="0 0 12 21" fill="none"><polyline points="1,1.5 10,10.5 1,19.5" stroke="#cccccc" stroke-width="2"/></svg><svg style="position:absolute;left:154px;top:1945px;" width="30" height="26" viewBox="0 0 30 26" fill="none"><path d="M1.3 4.6 Q1.3 1.3 4.6 1.3 H9.5 Q10.8 1.3 11.8 2.3 L14 4.6 Q15 5.6 16.3 5.6 H21.9 Q25.2 5.6 25.2 8.9 V17.2 Q25.2 20.5 21.9 20.5 H4.6 Q1.3 20.5 1.3 17.2 Z" stroke="#71819c" stroke-width="2.6"/></svg><div style="position:absolute;left:196px;top:1939.5px;height:35px;line-height:35px;font-size:27px;color:#8b8b8b;font-weight:400;letter-spacing:0.42px;white-space:pre;-webkit-text-stroke:0.3px currentColor;">generated-types</div><svg style="position:absolute;left:125px;top:1991px;" width="12" height="21" viewBox="0 0 12 21" fill="none"><polyline points="1,1.5 10,10.5 1,19.5" stroke="#cccccc" stroke-width="2"/></svg><svg style="position:absolute;left:154px;top:1989px;" width="30" height="26" viewBox="0 0 30 26" fill="none"><path d="M1.3 4.6 Q1.3 1.3 4.6 1.3 H9.5 Q10.8 1.3 11.8 2.3 L14 4.6 Q15 5.6 16.3 5.6 H21.9 Q25.2 5.6 25.2 8.9 V17.2 Q25.2 20.5 21.9 20.5 H4.6 Q1.3 20.5 1.3 17.2 Z" stroke="#71819c" stroke-width="2.6"/><rect x="14" y="12" width="16" height="14" fill="#242424"/><rect x="16" y="14" width="12" height="11" rx="1.5" stroke="#c07cf0" stroke-width="2"/><circle cx="22" cy="18" r="1.8" stroke="#c07cf0" stroke-width="1.5"/><path d="M17 25 L22 20.5 L27 25" stroke="#c07cf0" stroke-width="1.8"/></svg><div style="position:absolute;left:196px;top:1983.5px;height:35px;line-height:35px;font-size:27px;color:#cccccc;font-weight:400;letter-spacing:0.42px;white-space:pre;-webkit-text-stroke:0.3px currentColor;">images</div><svg style="position:absolute;left:125px;top:2035px;" width="12" height="21" viewBox="0 0 12 21" fill="none"><polyline points="1,1.5 10,10.5 1,19.5" stroke="#cccccc" stroke-width="2"/></svg><svg style="position:absolute;left:154px;top:2033px;" width="30" height="26" viewBox="0 0 30 26" fill="none"><path d="M1.3 4.6 Q1.3 1.3 4.6 1.3 H9.5 Q10.8 1.3 11.8 2.3 L14 4.6 Q15 5.6 16.3 5.6 H21.9 Q25.2 5.6 25.2 8.9 V17.2 Q25.2 20.5 21.9 20.5 H4.6 Q1.3 20.5 1.3 17.2 Z" stroke="#71819c" stroke-width="2.6"/><circle cx="23" cy="19.5" r="6.5" fill="#242424"/><circle cx="23" cy="19.5" r="4.8" fill="#4cae4f"/></svg><div style="position:absolute;left:196px;top:2027.5px;height:35px;line-height:35px;font-size:27px;color:#8b8b8b;font-weight:400;letter-spacing:0.42px;white-space:pre;-webkit-text-stroke:0.3px currentColor;">node_modules</div><svg style="position:absolute;left:120px;top:2083px;" width="21" height="12" viewBox="0 0 21 12" fill="none"><polyline points="1,1 10.5,10.5 20,1" stroke="#cccccc" stroke-width="2"/></svg><svg style="position:absolute;left:154px;top:2077px;" width="30" height="26" viewBox="0 0 30 26" fill="none"><path d="M1.3 4.6 Q1.3 1.3 4.6 1.3 H9.5 Q10.8 1.3 11.8 2.3 L14 4.6 Q15 5.6 16.3 5.6 H21.9 Q25.2 5.6 25.2 8.9 V17.2 Q25.2 20.5 21.9 20.5 H4.6 Q1.3 20.5 1.3 17.2 Z" stroke="#71819c" stroke-width="2.6"/><rect x="14" y="13" width="16" height="13" fill="#242424"/><path d="M19 16 L16 19.5 L19 23 M25 16 L28 19.5 L25 23" stroke="#e55b4d" stroke-width="2"/></svg><div style="position:absolute;left:196px;top:2071.5px;height:35px;line-height:35px;font-size:27px;color:#cccccc;font-weight:400;letter-spacing:0.42px;white-space:pre;-webkit-text-stroke:0.3px currentColor;">scripts</div><div style="position:absolute;left:124px;top:483px;width:2px;height:572px;background:#585858;"></div></div>
<div style="position:absolute;left:84px;top:2092px;width:600px;height:2px;background:#3a3a3a;"></div>
<div style="position:absolute;left:84px;top:2136px;width:600px;height:2px;background:#3a3a3a;"></div>
<svg style="position:absolute;left:96px;top:2105px;" width="12" height="21" viewBox="0 0 12 21" fill="none"><polyline points="1,1.5 10,10.5 1,19.5" stroke="#cccccc" stroke-width="2"/></svg>
<div style="position:absolute;left:124px;top:2099.5px;height:31px;line-height:31px;font-size:24px;color:#cccccc;font-weight:400;letter-spacing:0.5px;white-space:pre;-webkit-text-stroke:0.9px currentColor;">Outline</div>
<svg style="position:absolute;left:96px;top:2148px;" width="12" height="21" viewBox="0 0 12 21" fill="none"><polyline points="1,1.5 10,10.5 1,19.5" stroke="#cccccc" stroke-width="2"/></svg>
<div style="position:absolute;left:124px;top:2143.5px;height:31px;line-height:31px;font-size:24px;color:#cccccc;font-weight:400;letter-spacing:0.5px;white-space:pre;-webkit-text-stroke:0.9px currentColor;">Timeline</div>
<div style="position:absolute;left:684px;top:148px;width:2503px;height:60px;background:#2d2d2d;"></div>
<div style="position:absolute;left:2765px;top:148px;width:422px;height:60px;background:#1e1e1e;"></div>
<div style="position:absolute;left:756px;top:148px;width:2px;height:60px;background:#242424;"></div>
<div style="position:absolute;left:1258px;top:148px;width:2px;height:60px;background:#242424;"></div>
<div style="position:absolute;left:1720px;top:148px;width:2px;height:60px;background:#242424;"></div>
<div style="position:absolute;left:2283px;top:148px;width:2px;height:60px;background:#242424;"></div>
<div style="position:absolute;left:2523px;top:148px;width:2px;height:60px;background:#242424;"></div>
<div style="position:absolute;left:688px;top:160.5px;height:35px;line-height:35px;font-size:27px;color:#9d9d9d;font-weight:400;letter-spacing:0.3px;white-space:pre;-webkit-text-stroke:0.3px currentColor;clip-path:inset(0 0 0 12px);margin-left:-13px;">ol</div>
<svg style="position:absolute;left:786px;top:166px;" width="15" height="24" viewBox="0 0 15 24" fill="none"><polygon points="4,0 11.8,0 15,6.8 7.3,6.8" fill="#8a45e0"/><polygon points="11.8,0 15,6.8 7.3,6.8" fill="#a35ef7"/><polygon points="4,0 7.3,6.8 0,6.6" fill="#6a2bbd"/><polygon points="0,6.6 7.3,6.8 3.8,13" fill="#a35ef7"/><polygon points="11.2,11 15,17.3 7.4,17.3" fill="#a35ef7"/><polygon points="0,17.3 15,17.3 11.3,24 3.7,24" fill="#8a45e0"/><polygon points="0,17.3 7.4,17.3 3.7,24" fill="#a35ef7"/><polygon points="7.4,17.3 15,17.3 11.3,24" fill="#6a2bbd"/></svg>
<div style="position:absolute;left:822px;top:162.5px;height:33px;line-height:33px;font-size:26px;color:#9d9d9d;font-weight:400;letter-spacing:0.55px;white-space:pre;-webkit-text-stroke:0.3px currentColor;">IConfidentialApproveVerifier.sol</div>
<svg style="position:absolute;left:1288px;top:166px;" width="15" height="24" viewBox="0 0 15 24" fill="none"><polygon points="4,0 11.8,0 15,6.8 7.3,6.8" fill="#8a45e0"/><polygon points="11.8,0 15,6.8 7.3,6.8" fill="#a35ef7"/><polygon points="4,0 7.3,6.8 0,6.6" fill="#6a2bbd"/><polygon points="0,6.6 7.3,6.8 3.8,13" fill="#a35ef7"/><polygon points="11.2,11 15,17.3 7.4,17.3" fill="#a35ef7"/><polygon points="0,17.3 15,17.3 11.3,24 3.7,24" fill="#8a45e0"/><polygon points="0,17.3 7.4,17.3 3.7,24" fill="#a35ef7"/><polygon points="7.4,17.3 15,17.3 11.3,24" fill="#6a2bbd"/></svg>
<div style="position:absolute;left:1323px;top:162.5px;height:33px;line-height:33px;font-size:26px;color:#9d9d9d;font-weight:400;letter-spacing:0.55px;white-space:pre;-webkit-text-stroke:0.3px currentColor;">ICancelAllowanceVerifier.sol</div>
<svg style="position:absolute;left:1749px;top:166px;" width="15" height="24" viewBox="0 0 15 24" fill="none"><polygon points="4,0 11.8,0 15,6.8 7.3,6.8" fill="#8a45e0"/><polygon points="11.8,0 15,6.8 7.3,6.8" fill="#a35ef7"/><polygon points="4,0 7.3,6.8 0,6.6" fill="#6a2bbd"/><polygon points="0,6.6 7.3,6.8 3.8,13" fill="#a35ef7"/><polygon points="11.2,11 15,17.3 7.4,17.3" fill="#a35ef7"/><polygon points="0,17.3 15,17.3 11.3,24 3.7,24" fill="#8a45e0"/><polygon points="0,17.3 7.4,17.3 3.7,24" fill="#a35ef7"/><polygon points="7.4,17.3 15,17.3 11.3,24" fill="#6a2bbd"/></svg>
<div style="position:absolute;left:1785px;top:162.5px;height:33px;line-height:33px;font-size:26px;color:#9d9d9d;font-weight:400;letter-spacing:0.55px;white-space:pre;-webkit-text-stroke:0.3px currentColor;">IConfidentialTransferFromVerifier.sol</div>
<svg style="position:absolute;left:2312px;top:166px;" width="24" height="24" viewBox="0 0 24 24" fill="none"><path d="M1 6H23M1 18H23" stroke="#9d9d9d" stroke-width="2"/><circle cx="15" cy="6" r="3" fill="#2a2a2a" stroke="#9d9d9d" stroke-width="2"/><circle cx="8" cy="18" r="3" fill="#2a2a2a" stroke="#9d9d9d" stroke-width="2"/></svg>
<div style="position:absolute;left:2348px;top:162.5px;height:33px;line-height:33px;font-size:26px;color:#9d9d9d;font-weight:400;letter-spacing:0.55px;white-space:pre;-webkit-text-stroke:0.3px currentColor;">Settings</div>
<svg style="position:absolute;left:2551px;top:166px;" width="26" height="24" viewBox="0 0 26 24" fill="none"><path d="M1 5 L4 8 L9 2 M1 16 L4 19 L9 13" stroke="#9d9d9d" stroke-width="2"/><path d="M12 4H25M12 11H25M12 18H25" stroke="#9d9d9d" stroke-width="2"/></svg>
<div style="position:absolute;left:2588px;top:162.5px;height:33px;line-height:33px;font-size:26px;color:#9d9d9d;font-weight:400;letter-spacing:0.55px;white-space:pre;-webkit-text-stroke:0.3px currentColor;">Task</div>
<svg style="position:absolute;left:2790px;top:165px;" width="22" height="27" viewBox="0 0 22 27" fill="none"><path d="M4.4 1.4 H12.8 L20.6 8.6 V22.4 Q20.6 25.2 17.8 25.2 H4.2 Q1.4 25.2 1.4 22.4 V4.4 Q1.4 1.4 4.4 1.4 Z M11.6 1.4 V9.6 H20.6" stroke="#71819c" stroke-width="2.7" stroke-linejoin="round"/></svg>
<div style="position:absolute;left:2828px;top:162.5px;height:33px;line-height:33px;font-size:26px;color:#ffffff;font-weight:400;letter-spacing:0.55px;white-space:pre;-webkit-text-stroke:0.3px currentColor;">cancel_allowance.circom</div>
<svg style="position:absolute;left:3149px;top:168px;" width="20" height="20" viewBox="0 0 20 20" fill="none"><path d="M1 1L19 19M19 1L1 19" stroke="#e0e0e0" stroke-width="2"/></svg>
<svg style="position:absolute;left:3205px;top:163px;" width="28" height="28" viewBox="0 0 28 28" fill="none"><rect x="1.2" y="1.2" width="25.6" height="25.6" rx="3" stroke="#cccccc" stroke-width="2.2"/><line x1="14" y1="1" x2="14" y2="27" stroke="#cccccc" stroke-width="2.2"/></svg>
<svg style="position:absolute;left:3257px;top:168px;" width="26" height="22" viewBox="0 0 26 22" fill="none"><path d="M25 11H2M11 1L1.5 11L11 21" stroke="#cccccc" stroke-width="2.2"/></svg>
<svg style="position:absolute;left:3309px;top:168px;" width="26" height="22" viewBox="0 0 26 22" fill="none"><path d="M1 11H24M15 1L24.5 11L15 21" stroke="#cccccc" stroke-width="2.2"/></svg>
<div style="position:absolute;left:3363px;top:176px;width:5px;height:5px;border-radius:50%;background:#cccccc"></div>
<div style="position:absolute;left:3373px;top:176px;width:5px;height:5px;border-radius:50%;background:#cccccc"></div>
<div style="position:absolute;left:3383px;top:176px;width:5px;height:5px;border-radius:50%;background:#cccccc"></div>
<div style="position:absolute;left:715px;top:213.5px;height:35px;line-height:35px;font-size:27px;color:#a9a9a9;font-weight:400;letter-spacing:0.3px;white-space:pre;-webkit-text-stroke:0.3px currentColor;">circom</div>
<svg style="position:absolute;left:809px;top:222px;" width="12" height="21" viewBox="0 0 12 21" fill="none"><polyline points="1,1.5 10,10.5 1,19.5" stroke="#a9a9a9" stroke-width="2"/></svg>
<svg style="position:absolute;left:835px;top:218px;" width="22" height="27" viewBox="0 0 22 27" fill="none"><path d="M4.4 1.4 H12.8 L20.6 8.6 V22.4 Q20.6 25.2 17.8 25.2 H4.2 Q1.4 25.2 1.4 22.4 V4.4 Q1.4 1.4 4.4 1.4 Z M11.6 1.4 V9.6 H20.6" stroke="#71819c" stroke-width="2.7" stroke-linejoin="round"/></svg>
<div style="position:absolute;left:874px;top:213.5px;height:35px;line-height:35px;font-size:27px;color:#a9a9a9;font-weight:400;letter-spacing:0.3px;white-space:pre;-webkit-text-stroke:0.3px currentColor;">cancel_allowance.circom</div>
<div style="position:absolute;left:0;top:0;width:3420px;height:1611px;clip-path:inset(252px 0 0 684px);"><div style="position:absolute;left:860.35px;top:432px;width:231.2px;height:36px;background:#4a505e"></div><div style="position:absolute;left:1091.55px;top:432px;width:86.69999999999999px;height:36px;background:#424242"></div><div style="position:absolute;left:947.05px;top:648px;width:317.9px;height:36px;background:#424242"></div><div style="position:absolute;left:816px;top:432px;width:2px;height:216px;background:#404040"></div><div style="position:absolute;left:816px;top:684px;width:2px;height:936px;background:#404040"></div><div style="position:absolute;left:700px;width:64px;text-align:right;top:252px;height:36px;line-height:36px;font-family:'Liberation Mono', monospace;font-size:24.08px;color:#858585;transform:translateY(1.9px) scaleY(1.16);transform-origin:0 24.4px;-webkit-text-stroke:0.3px currentColor;">1</div><div style="position:absolute;left:817px;top:252px;height:36px;line-height:36px;font-family:'Liberation Mono', monospace;font-size:24.08px;color:#d4d4d4;white-space:pre;transform:translateY(1.9px) scaleY(1.16);transform-origin:0 24.4px;-webkit-text-stroke:0.3px currentColor;">pragma circom 2.1.9;</div><div style="position:absolute;left:700px;width:64px;text-align:right;top:288px;height:36px;line-height:36px;font-family:'Liberation Mono', monospace;font-size:24.08px;color:#858585;transform:translateY(1.9px) scaleY(1.16);transform-origin:0 24.4px;-webkit-text-stroke:0.3px currentColor;">2</div><div style="position:absolute;left:700px;width:64px;text-align:right;top:324px;height:36px;line-height:36px;font-family:'Liberation Mono', monospace;font-size:24.08px;color:#858585;transform:translateY(1.9px) scaleY(1.16);transform-origin:0 24.4px;-webkit-text-stroke:0.3px currentColor;">3</div><div style="position:absolute;left:817px;top:324px;height:36px;line-height:36px;font-family:'Liberation Mono', monospace;font-size:24.08px;color:#d4d4d4;white-space:pre;transform:translateY(1.9px) scaleY(1.16);transform-origin:0 24.4px;-webkit-text-stroke:0.3px currentColor;">include &quot;./components.circom&quot;;</div><div style="position:absolute;left:700px;width:64px;text-align:right;top:360px;height:36px;line-height:36px;font-family:'Liberation Mono', monospace;font-size:24.08px;color:#858585;transform:translateY(1.9px) scaleY(1.16);transform-origin:0 24.4px;-webkit-text-stroke:0.3px currentColor;">4</div><div style="position:absolute;left:700px;width:64px;text-align:right;top:396px;height:36px;line-height:36px;font-family:'Liberation Mono', monospace;font-size:24.08px;color:#858585;transform:translateY(1.9px) scaleY(1.16);transform-origin:0 24.4px;-webkit-text-stroke:0.3px currentColor;">5</div><div style="position:absolute;left:817px;top:396px;height:36px;line-height:36px;font-family:'Liberation Mono', monospace;font-size:24.08px;color:#d4d4d4;white-space:pre;transform:translateY(1.9px) scaleY(1.16);transform-origin:0 24.4px;-webkit-text-stroke:0.3px currentColor;">/<span style="display:inline-block;transform:translateY(9.4px) scale(1.4,1.3);">*</span><span style="display:inline-block;transform:translateY(9.4px) scale(1.4,1.3);">*</span></div><div style="position:absolute;left:700px;width:64px;text-align:right;top:432px;height:36px;line-height:36px;font-family:'Liberation Mono', monospace;font-size:24.08px;color:#c6c6c6;transform:translateY(1.9px) scaleY(1.16);transform-origin:0 24.4px;-webkit-text-stroke:0.3px currentColor;">6</div><div style="position:absolute;left:817px;top:432px;height:36px;line-height:36px;font-family:'Liberation Mono', monospace;font-size:24.08px;color:#d4d4d4;white-space:pre;transform:translateY(1.9px) scaleY(1.16);transform-origin:0 24.4px;-webkit-text-stroke:0.3px currentColor;"> <span style="display:inline-block;transform:translateY(9.4px) scale(1.4,1.3);">*</span> CancelAllowanceCircuit</div><div style="position:absolute;left:700px;width:64px;text-align:right;top:468px;height:36px;line-height:36px;font-family:'Liberation Mono', monospace;font-size:24.08px;color:#858585;transform:translateY(1.9px) scaleY(1.16);transform-origin:0 24.4px;-webkit-text-stroke:0.3px currentColor;">7</div><div style="position:absolute;left:817px;top:468px;height:36px;line-height:36px;font-family:'Liberation Mono', monospace;font-size:24.08px;color:#d4d4d4;white-space:pre;transform:translateY(1.9px) scaleY(1.16);transform-origin:0 24.4px;-webkit-text-stroke:0.3px currentColor;"> <span style="display:inline-block;transform:translateY(9.4px) scale(1.4,1.3);">*</span></div><div style="position:absolute;left:700px;width:64px;text-align:right;top:504px;height:36px;line-height:36px;font-family:'Liberation Mono', monospace;font-size:24.08px;color:#858585;transform:translateY(1.9px) scaleY(1.16);transform-origin:0 24.4px;-webkit-text-stroke:0.3px currentColor;">8</div><div style="position:absolute;left:817px;top:504px;height:36px;line-height:36px;font-family:'Liberation Mono', monospace;font-size:24.08px;color:#d4d4d4;white-space:pre;transform:translateY(1.9px) scaleY(1.16);transform-origin:0 24.4px;-webkit-text-stroke:0.3px currentColor;"> <span style="display:inline-block;transform:translateY(9.4px) scale(1.4,1.3);">*</span> This circuit proves:</div><div style="position:absolute;left:700px;width:64px;text-align:right;top:540px;height:36px;line-height:36px;font-family:'Liberation Mono', monospace;font-size:24.08px;color:#858585;transform:translateY(1.9px) scaleY(1.16);transform-origin:0 24.4px;-webkit-text-stroke:0.3px currentColor;">9</div><div style="position:absolute;left:817px;top:540px;height:36px;line-height:36px;font-family:'Liberation Mono', monospace;font-size:24.08px;color:#d4d4d4;white-space:pre;transform:translateY(1.9px) scaleY(1.16);transform-origin:0 24.4px;-webkit-text-stroke:0.3px currentColor;"> <span style="display:inline-block;transform:translateY(9.4px) scale(1.4,1.3);">*</span> 1. Approver owns the private key for cancellation</div><div style="position:absolute;left:700px;width:64px;text-align:right;top:576px;height:36px;line-height:36px;font-family:'Liberation Mono', monospace;font-size:24.08px;color:#858585;transform:translateY(1.9px) scaleY(1.16);transform-origin:0 24.4px;-webkit-text-stroke:0.3px currentColor;">10</div><div style="position:absolute;left:817px;top:576px;height:36px;line-height:36px;font-family:'Liberation Mono', monospace;font-size:24.08px;color:#d4d4d4;white-space:pre;transform:translateY(1.9px) scaleY(1.16);transform-origin:0 24.4px;-webkit-text-stroke:0.3px currentColor;"> <span style="display:inline-block;transform:translateY(9.4px) scale(1.4,1.3);">*</span> 2. The provided allowance matches what was stored</div><div style="position:absolute;left:700px;width:64px;text-align:right;top:612px;height:36px;line-height:36px;font-family:'Liberation Mono', monospace;font-size:24.08px;color:#858585;transform:translateY(1.9px) scaleY(1.16);transform-origin:0 24.4px;-webkit-text-stroke:0.3px currentColor;">11</div><div style="position:absolute;left:817px;top:612px;height:36px;line-height:36px;font-family:'Liberation Mono', monospace;font-size:24.08px;color:#d4d4d4;white-space:pre;transform:translateY(1.9px) scaleY(1.16);transform-origin:0 24.4px;-webkit-text-stroke:0.3px currentColor;"> <span style="display:inline-block;transform:translateY(9.4px) scale(1.4,1.3);">*</span>/</div><div style="position:absolute;left:700px;width:64px;text-align:right;top:648px;height:36px;line-height:36px;font-family:'Liberation Mono', monospace;font-size:24.08px;color:#858585;transform:translateY(1.9px) scaleY(1.16);transform-origin:0 24.4px;-webkit-text-stroke:0.3px currentColor;">12</div><div style="position:absolute;left:817px;top:648px;height:36px;line-height:36px;font-family:'Liberation Mono', monospace;font-size:24.08px;color:#d4d4d4;white-space:pre;transform:translateY(1.9px) scaleY(1.16);transform-origin:0 24.4px;-webkit-text-stroke:0.3px currentColor;">template CancelAllowanceCircuit() {</div><div style="position:absolute;left:700px;width:64px;text-align:right;top:684px;height:36px;line-height:36px;font-family:'Liberation Mono', monospace;font-size:24.08px;color:#858585;transform:translateY(1.9px) scaleY(1.16);transform-origin:0 24.4px;-webkit-text-stroke:0.3px currentColor;">13</div><div style="position:absolute;left:817px;top:684px;height:36px;line-height:36px;font-family:'Liberation Mono', monospace;font-size:24.08px;color:#d4d4d4;white-space:pre;transform:translateY(1.9px) scaleY(1.16);transform-origin:0 24.4px;-webkit-text-stroke:0.3px currentColor;">    // Private inputs</div><div style="position:absolute;left:700px;width:64px;text-align:right;top:720px;height:36px;line-height:36px;font-family:'Liberation Mono', monospace;font-size:24.08px;color:#858585;transform:translateY(1.9px) scaleY(1.16);transform-origin:0 24.4px;-webkit-text-stroke:0.3px currentColor;">14</div><div style="position:absolute;left:817px;top:720px;height:36px;line-height:36px;font-family:'Liberation Mono', monospace;font-size:24.08px;color:#d4d4d4;white-space:pre;transform:translateY(1.9px) scaleY(1.16);transform-origin:0 24.4px;-webkit-text-stroke:0.3px currentColor;">    signal input ApproverPrivateKey;</div><div style="position:absolute;left:700px;width:64px;text-align:right;top:756px;height:36px;line-height:36px;font-family:'Liberation Mono', monospace;font-size:24.08px;color:#858585;transform:translateY(1.9px) scaleY(1.16);transform-origin:0 24.4px;-webkit-text-stroke:0.3px currentColor;">15</div><div style="position:absolute;left:817px;top:756px;height:36px;line-height:36px;font-family:'Liberation Mono', monospace;font-size:24.08px;color:#d4d4d4;white-space:pre;transform:translateY(1.9px) scaleY(1.16);transform-origin:0 24.4px;-webkit-text-stroke:0.3px currentColor;">    signal input AllowanceAmount;          // The amount that was approved (for verification)</div><div style="position:absolute;left:700px;width:64px;text-align:right;top:792px;height:36px;line-height:36px;font-family:'Liberation Mono', monospace;font-size:24.08px;color:#858585;transform:translateY(1.9px) scaleY(1.16);transform-origin:0 24.4px;-webkit-text-stroke:0.3px currentColor;">16</div><div style="position:absolute;left:700px;width:64px;text-align:right;top:828px;height:36px;line-height:36px;font-family:'Liberation Mono', monospace;font-size:24.08px;color:#858585;transform:translateY(1.9px) scaleY(1.16);transform-origin:0 24.4px;-webkit-text-stroke:0.3px currentColor;">17</div><div style="position:absolute;left:817px;top:828px;height:36px;line-height:36px;font-family:'Liberation Mono', monospace;font-size:24.08px;color:#d4d4d4;white-space:pre;transform:translateY(1.9px) scaleY(1.16);transform-origin:0 24.4px;-webkit-text-stroke:0.3px currentColor;">    // Public inputs</div><div style="position:absolute;left:700px;width:64px;text-align:right;top:864px;height:36px;line-height:36px;font-family:'Liberation Mono', monospace;font-size:24.08px;color:#858585;transform:translateY(1.9px) scaleY(1.16);transform-origin:0 24.4px;-webkit-text-stroke:0.3px currentColor;">18</div><div style="position:absolute;left:817px;top:864px;height:36px;line-height:36px;font-family:'Liberation Mono', monospace;font-size:24.08px;color:#d4d4d4;white-space:pre;transform:translateY(1.9px) scaleY(1.16);transform-origin:0 24.4px;-webkit-text-stroke:0.3px currentColor;">    signal input ApproverPublicKey[2];</div><div style="position:absolute;left:700px;width:64px;text-align:right;top:900px;height:36px;line-height:36px;font-family:'Liberation Mono', monospace;font-size:24.08px;color:#858585;transform:translateY(1.9px) scaleY(1.16);transform-origin:0 24.4px;-webkit-text-stroke:0.3px currentColor;">19</div><div style="position:absolute;left:817px;top:900px;height:36px;line-height:36px;font-family:'Liberation Mono', monospace;font-size:24.08px;color:#d4d4d4;white-space:pre;transform:translateY(1.9px) scaleY(1.16);transform-origin:0 24.4px;-webkit-text-stroke:0.3px currentColor;">    signal input SpenderPublicKey[2];</div><div style="position:absolute;left:700px;width:64px;text-align:right;top:936px;height:36px;line-height:36px;font-family:'Liberation Mono', monospace;font-size:24.08px;color:#858585;transform:translateY(1.9px) scaleY(1.16);transform-origin:0 24.4px;-webkit-text-stroke:0.3px currentColor;">20</div><div style="position:absolute;left:817px;top:936px;height:36px;line-height:36px;font-family:'Liberation Mono', monospace;font-size:24.08px;color:#d4d4d4;white-space:pre;transform:translateY(1.9px) scaleY(1.16);transform-origin:0 24.4px;-webkit-text-stroke:0.3px currentColor;">    signal input AllowanceC1[2];           // Current encrypted allowance to cancel</div><div style="position:absolute;left:700px;width:64px;text-align:right;top:972px;height:36px;line-height:36px;font-family:'Liberation Mono', monospace;font-size:24.08px;color:#858585;transform:translateY(1.9px) scaleY(1.16);transform-origin:0 24.4px;-webkit-text-stroke:0.3px currentColor;">21</div><div style="position:absolute;left:817px;top:972px;height:36px;line-height:36px;font-family:'Liberation Mono', monospace;font-size:24.08px;color:#d4d4d4;white-space:pre;transform:translateY(1.9px) scaleY(1.16);transform-origin:0 24.4px;-webkit-text-stroke:0.3px currentColor;">    signal input AllowanceC2[2];</div><div style="position:absolute;left:700px;width:64px;text-align:right;top:1008px;height:36px;line-height:36px;font-family:'Liberation Mono', monospace;font-size:24.08px;color:#858585;transform:translateY(1.9px) scaleY(1.16);transform-origin:0 24.4px;-webkit-text-stroke:0.3px currentColor;">22</div><div style="position:absolute;left:700px;width:64px;text-align:right;top:1044px;height:36px;line-height:36px;font-family:'Liberation Mono', monospace;font-size:24.08px;color:#858585;transform:translateY(1.9px) scaleY(1.16);transform-origin:0 24.4px;-webkit-text-stroke:0.3px currentColor;">23</div><div style="position:absolute;left:817px;top:1044px;height:36px;line-height:36px;font-family:'Liberation Mono', monospace;font-size:24.08px;color:#d4d4d4;white-space:pre;transform:translateY(1.9px) scaleY(1.16);transform-origin:0 24.4px;-webkit-text-stroke:0.3px currentColor;">    // 1. Verify approver&#x27;s public key</div><div style="position:absolute;left:700px;width:64px;text-align:right;top:1080px;height:36px;line-height:36px;font-family:'Liberation Mono', monospace;font-size:24.08px;color:#858585;transform:translateY(1.9px) scaleY(1.16);transform-origin:0 24.4px;-webkit-text-stroke:0.3px currentColor;">24</div><div style="position:absolute;left:817px;top:1080px;height:36px;line-height:36px;font-family:'Liberation Mono', monospace;font-size:24.08px;color:#d4d4d4;white-space:pre;transform:translateY(1.9px) scaleY(1.16);transform-origin:0 24.4px;-webkit-text-stroke:0.3px currentColor;">    component checkApproverPK = CheckPublicKey();</div><div style="position:absolute;left:700px;width:64px;text-align:right;top:1116px;height:36px;line-height:36px;font-family:'Liberation Mono', monospace;font-size:24.08px;color:#858585;transform:translateY(1.9px) scaleY(1.16);transform-origin:0 24.4px;-webkit-text-stroke:0.3px currentColor;">25</div><div style="position:absolute;left:817px;top:1116px;height:36px;line-height:36px;font-family:'Liberation Mono', monospace;font-size:24.08px;color:#d4d4d4;white-space:pre;transform:translateY(1.9px) scaleY(1.16);transform-origin:0 24.4px;-webkit-text-stroke:0.3px currentColor;">    checkApproverPK.privKey &lt;== ApproverPrivateKey;</div><div style="position:absolute;left:700px;width:64px;text-align:right;top:1152px;height:36px;line-height:36px;font-family:'Liberation Mono', monospace;font-size:24.08px;color:#858585;transform:translateY(1.9px) scaleY(1.16);transform-origin:0 24.4px;-webkit-text-stroke:0.3px currentColor;">26</div><div style="position:absolute;left:817px;top:1152px;height:36px;line-height:36px;font-family:'Liberation Mono', monospace;font-size:24.08px;color:#d4d4d4;white-space:pre;transform:translateY(1.9px) scaleY(1.16);transform-origin:0 24.4px;-webkit-text-stroke:0.3px currentColor;">    checkApproverPK.pubKey[0] &lt;== ApproverPublicKey[0];</div><div style="position:absolute;left:700px;width:64px;text-align:right;top:1188px;height:36px;line-height:36px;font-family:'Liberation Mono', monospace;font-size:24.08px;color:#858585;transform:translateY(1.9px) scaleY(1.16);transform-origin:0 24.4px;-webkit-text-stroke:0.3px currentColor;">27</div><div style="position:absolute;left:817px;top:1188px;height:36px;line-height:36px;font-family:'Liberation Mono', monospace;font-size:24.08px;color:#d4d4d4;white-space:pre;transform:translateY(1.9px) scaleY(1.16);transform-origin:0 24.4px;-webkit-text-stroke:0.3px currentColor;">    checkApproverPK.pubKey[1] &lt;== ApproverPublicKey[1];</div><div style="position:absolute;left:700px;width:64px;text-align:right;top:1224px;height:36px;line-height:36px;font-family:'Liberation Mono', monospace;font-size:24.08px;color:#858585;transform:translateY(1.9px) scaleY(1.16);transform-origin:0 24.4px;-webkit-text-stroke:0.3px currentColor;">28</div><div style="position:absolute;left:700px;width:64px;text-align:right;top:1260px;height:36px;line-height:36px;font-family:'Liberation Mono', monospace;font-size:24.08px;color:#858585;transform:translateY(1.9px) scaleY(1.16);transform-origin:0 24.4px;-webkit-text-stroke:0.3px currentColor;">29</div><div style="position:absolute;left:817px;top:1260px;height:36px;line-height:36px;font-family:'Liberation Mono', monospace;font-size:24.08px;color:#d4d4d4;white-space:pre;transform:translateY(1.9px) scaleY(1.16);transform-origin:0 24.4px;-webkit-text-stroke:0.3px currentColor;">    // 2. Verify the allowance can be decrypted (proves ownership of the approval)</div><div style="position:absolute;left:700px;width:64px;text-align:right;top:1296px;height:36px;line-height:36px;font-family:'Liberation Mono', monospace;font-size:24.08px;color:#858585;transform:translateY(1.9px) scaleY(1.16);transform-origin:0 24.4px;-webkit-text-stroke:0.3px currentColor;">30</div><div style="position:absolute;left:817px;top:1296px;height:36px;line-height:36px;font-family:'Liberation Mono', monospace;font-size:24.08px;color:#d4d4d4;white-space:pre;transform:translateY(1.9px) scaleY(1.16);transform-origin:0 24.4px;-webkit-text-stroke:0.3px currentColor;">    // The spender&#x27;s public key was used for encryption, but the approver</div><div style="position:absolute;left:700px;width:64px;text-align:right;top:1332px;height:36px;line-height:36px;font-family:'Liberation Mono', monospace;font-size:24.08px;color:#858585;transform:translateY(1.9px) scaleY(1.16);transform-origin:0 24.4px;-webkit-text-stroke:0.3px currentColor;">31</div><div style="position:absolute;left:817px;top:1332px;height:36px;line-height:36px;font-family:'Liberation Mono', monospace;font-size:24.08px;color:#d4d4d4;white-space:pre;transform:translateY(1.9px) scaleY(1.16);transform-origin:0 24.4px;-webkit-text-stroke:0.3px currentColor;">    // created it, so we verify the structure matches</div><div style="position:absolute;left:700px;width:64px;text-align:right;top:1368px;height:36px;line-height:36px;font-family:'Liberation Mono', monospace;font-size:24.08px;color:#858585;transform:translateY(1.9px) scaleY(1.16);transform-origin:0 24.4px;-webkit-text-stroke:0.3px currentColor;">32</div><div style="position:absolute;left:817px;top:1368px;height:36px;line-height:36px;font-family:'Liberation Mono', monospace;font-size:24.08px;color:#d4d4d4;white-space:pre;transform:translateY(1.9px) scaleY(1.16);transform-origin:0 24.4px;-webkit-text-stroke:0.3px currentColor;">    component checkPoint1 = BabyCheck();</div><div style="position:absolute;left:700px;width:64px;text-align:right;top:1404px;height:36px;line-height:36px;font-family:'Liberation Mono', monospace;font-size:24.08px;color:#858585;transform:translateY(1.9px) scaleY(1.16);transform-origin:0 24.4px;-webkit-text-stroke:0.3px currentColor;">33</div><div style="position:absolute;left:817px;top:1404px;height:36px;line-height:36px;font-family:'Liberation Mono', monospace;font-size:24.08px;color:#d4d4d4;white-space:pre;transform:translateY(1.9px) scaleY(1.16);transform-origin:0 24.4px;-webkit-text-stroke:0.3px currentColor;">    checkPoint1.x &lt;== AllowanceC1[0];</div><div style="position:absolute;left:700px;width:64px;text-align:right;top:1440px;height:36px;line-height:36px;font-family:'Liberation Mono', monospace;font-size:24.08px;color:#858585;transform:translateY(1.9px) scaleY(1.16);transform-origin:0 24.4px;-webkit-text-stroke:0.3px currentColor;">34</div><div style="position:absolute;left:817px;top:1440px;height:36px;line-height:36px;font-family:'Liberation Mono', monospace;font-size:24.08px;color:#d4d4d4;white-space:pre;transform:translateY(1.9px) scaleY(1.16);transform-origin:0 24.4px;-webkit-text-stroke:0.3px currentColor;">    checkPoint1.y &lt;== AllowanceC1[1];</div><div style="position:absolute;left:700px;width:64px;text-align:right;top:1476px;height:36px;line-height:36px;font-family:'Liberation Mono', monospace;font-size:24.08px;color:#858585;transform:translateY(1.9px) scaleY(1.16);transform-origin:0 24.4px;-webkit-text-stroke:0.3px currentColor;">35</div><div style="position:absolute;left:700px;width:64px;text-align:right;top:1512px;height:36px;line-height:36px;font-family:'Liberation Mono', monospace;font-size:24.08px;color:#858585;transform:translateY(1.9px) scaleY(1.16);transform-origin:0 24.4px;-webkit-text-stroke:0.3px currentColor;">36</div><div style="position:absolute;left:817px;top:1512px;height:36px;line-height:36px;font-family:'Liberation Mono', monospace;font-size:24.08px;color:#d4d4d4;white-space:pre;transform:translateY(1.9px) scaleY(1.16);transform-origin:0 24.4px;-webkit-text-stroke:0.3px currentColor;">    component checkPoint2 = BabyCheck();</div><div style="position:absolute;left:700px;width:64px;text-align:right;top:1548px;height:36px;line-height:36px;font-family:'Liberation Mono', monospace;font-size:24.08px;color:#858585;transform:translateY(1.9px) scaleY(1.16);transform-origin:0 24.4px;-webkit-text-stroke:0.3px currentColor;">37</div><div style="position:absolute;left:817px;top:1548px;height:36px;line-height:36px;font-family:'Liberation Mono', monospace;font-size:24.08px;color:#d4d4d4;white-space:pre;transform:translateY(1.9px) scaleY(1.16);transform-origin:0 24.4px;-webkit-text-stroke:0.3px currentColor;">    checkPoint2.x &lt;== AllowanceC2[0];</div><div style="position:absolute;left:700px;width:64px;text-align:right;top:1584px;height:36px;line-height:36px;font-family:'Liberation Mono', monospace;font-size:24.08px;color:#858585;transform:translateY(1.9px) scaleY(1.16);transform-origin:0 24.4px;-webkit-text-stroke:0.3px currentColor;">38</div><div style="position:absolute;left:817px;top:1584px;height:36px;line-height:36px;font-family:'Liberation Mono', monospace;font-size:24.08px;color:#d4d4d4;white-space:pre;transform:translateY(1.9px) scaleY(1.16);transform-origin:0 24.4px;-webkit-text-stroke:0.3px currentColor;">    checkPoint2.y &lt;== AllowanceC2[1];</div><div style="position:absolute;left:1088px;top:432px;width:4px;height:36px;background:#b4b4b4"></div></div>
<div style="position:absolute;left:1215px;top:433px;width:258px;height:64px;border-radius:12px;background:#252525;border:2px solid #353535;box-shadow:0 4px 16px rgba(0,0,0,0.5);"></div>
<div style="position:absolute;left:1236px;top:449.5px;height:31px;line-height:31px;font-size:24px;color:#e6e6e6;font-weight:400;letter-spacing:0.2px;white-space:pre;-webkit-text-stroke:0.3px currentColor;">Edit</div>
<div style="position:absolute;left:1304px;top:449.5px;height:31px;line-height:31px;font-size:24px;color:#e6e6e6;font-weight:400;letter-spacing:0.2px;white-space:pre;-webkit-text-stroke:0.3px currentColor;">Chat</div>
<div style="position:absolute;left:1364px;top:450.5px;height:29px;line-height:29px;font-size:23px;color:#7a7a7a;font-weight:400;letter-spacing:0px;white-space:pre;-webkit-text-stroke:0.3px currentColor;">⌘L</div>
<div style="position:absolute;left:1429px;top:463px;width:4px;height:4px;background:#d0d0d0"></div>
<div style="position:absolute;left:1437px;top:463px;width:4px;height:4px;background:#d0d0d0"></div>
<div style="position:absolute;left:1445px;top:463px;width:4px;height:4px;background:#d0d0d0"></div>
<div style="position:absolute;left:3160px;top:251px;width:232px;height:180px;overflow:hidden;"><div style="position:absolute;left:0;top:44px;width:232px;height:4px;background:#3d3d3d"></div><div style="position:absolute;left:0;top:172px;width:232px;height:4px;background:#3d3d3d"></div><div style="position:absolute;left:6px;top:20px;width:44px;height:4px;background:#5a5a5a"></div><div style="position:absolute;left:18px;top:44px;width:44px;height:4px;background:#5a5a5a"></div><div style="position:absolute;left:0;top:-1px;height:6px;line-height:6px;font-family:'Liberation Mono', monospace;font-size:5px;font-weight:700;letter-spacing:-1.0px;color:#b0b0b0;white-space:pre;">pragma circom 2.1.9;</div><div style="position:absolute;left:0;top:7px;height:6px;line-height:6px;font-family:'Liberation Mono', monospace;font-size:5px;font-weight:700;letter-spacing:-1.0px;color:#b0b0b0;white-space:pre;">include &quot;./components.circom&quot;;</div><div style="position:absolute;left:0;top:15px;height:6px;line-height:6px;font-family:'Liberation Mono', monospace;font-size:5px;font-weight:700;letter-spacing:-1.0px;color:#b0b0b0;white-space:pre;">/**</div><div style="position:absolute;left:0;top:19px;height:6px;line-height:6px;font-family:'Liberation Mono', monospace;font-size:5px;font-weight:700;letter-spacing:-1.0px;color:#b0b0b0;white-space:pre;"> * CancelAllowanceCircuit</div><div style="position:absolute;left:0;top:23px;height:6px;line-height:6px;font-family:'Liberation Mono', monospace;font-size:5px;font-weight:700;letter-spacing:-1.0px;color:#b0b0b0;white-space:pre;"> *</div><div style="position:absolute;left:0;top:27px;height:6px;line-height:6px;font-family:'Liberation Mono', monospace;font-size:5px;font-weight:700;letter-spacing:-1.0px;color:#b0b0b0;white-space:pre;"> * This circuit proves:</div><div style="position:absolute;left:0;top:31px;height:6px;line-height:6px;font-family:'Liberation Mono', monospace;font-size:5px;font-weight:700;letter-spacing:-1.0px;color:#b0b0b0;white-space:pre;"> * 1. Approver owns the private key for cancellation</div><div style="position:absolute;left:0;top:35px;height:6px;line-height:6px;font-family:'Liberation Mono', monospace;font-size:5px;font-weight:700;letter-spacing:-1.0px;color:#b0b0b0;white-space:pre;"> * 2. The provided allowance matches what was stored</div><div style="position:absolute;left:0;top:39px;height:6px;line-height:6px;font-family:'Liberation Mono', monospace;font-size:5px;font-weight:700;letter-spacing:-1.0px;color:#b0b0b0;white-space:pre;"> */</div><div style="position:absolute;left:0;top:43px;height:6px;line-height:6px;font-family:'Liberation Mono', monospace;font-size:5px;font-weight:700;letter-spacing:-1.0px;color:#b0b0b0;white-space:pre;">template CancelAllowanceCircuit() {</div><div style="position:absolute;left:0;top:47px;height:6px;line-height:6px;font-family:'Liberation Mono', monospace;font-size:5px;font-weight:700;letter-spacing:-1.0px;color:#b0b0b0;white-space:pre;">    // Private inputs</div><div style="position:absolute;left:0;top:51px;height:6px;line-height:6px;font-family:'Liberation Mono', monospace;font-size:5px;font-weight:700;letter-spacing:-1.0px;color:#b0b0b0;white-space:pre;">    signal input ApproverPrivateKey;</div><div style="position:absolute;left:0;top:55px;height:6px;line-height:6px;font-family:'Liberation Mono', monospace;font-size:5px;font-weight:700;letter-spacing:-1.0px;color:#b0b0b0;white-space:pre;">    signal input AllowanceAmount;          // The amount that was approved (for verification)</div><div style="position:absolute;left:0;top:63px;height:6px;line-height:6px;font-family:'Liberation Mono', monospace;font-size:5px;font-weight:700;letter-spacing:-1.0px;color:#b0b0b0;white-space:pre;">    // Public inputs</div><div style="position:absolute;left:0;top:67px;height:6px;line-height:6px;font-family:'Liberation Mono', monospace;font-size:5px;font-weight:700;letter-spacing:-1.0px;color:#b0b0b0;white-space:pre;">    signal input ApproverPublicKey[2];</div><div style="position:absolute;left:0;top:71px;height:6px;line-height:6px;font-family:'Liberation Mono', monospace;font-size:5px;font-weight:700;letter-spacing:-1.0px;color:#b0b0b0;white-space:pre;">    signal input SpenderPublicKey[2];</div><div style="position:absolute;left:0;top:75px;height:6px;line-height:6px;font-family:'Liberation Mono', monospace;font-size:5px;font-weight:700;letter-spacing:-1.0px;color:#b0b0b0;white-space:pre;">    signal input AllowanceC1[2];           // Current encrypted allowance to cancel</div><div style="position:absolute;left:0;top:79px;height:6px;line-height:6px;font-family:'Liberation Mono', monospace;font-size:5px;font-weight:700;letter-spacing:-1.0px;color:#b0b0b0;white-space:pre;">    signal input AllowanceC2[2];</div><div style="position:absolute;left:0;top:87px;height:6px;line-height:6px;font-family:'Liberation Mono', monospace;font-size:5px;font-weight:700;letter-spacing:-1.0px;color:#b0b0b0;white-space:pre;">    // 1. Verify approver&#x27;s public key</div><div style="position:absolute;left:0;top:91px;height:6px;line-height:6px;font-family:'Liberation Mono', monospace;font-size:5px;font-weight:700;letter-spacing:-1.0px;color:#b0b0b0;white-space:pre;">    component checkApproverPK = CheckPublicKey();</div><div style="position:absolute;left:0;top:95px;height:6px;line-height:6px;font-family:'Liberation Mono', monospace;font-size:5px;font-weight:700;letter-spacing:-1.0px;color:#b0b0b0;white-space:pre;">    checkApproverPK.privKey &lt;== ApproverPrivateKey;</div><div style="position:absolute;left:0;top:99px;height:6px;line-height:6px;font-family:'Liberation Mono', monospace;font-size:5px;font-weight:700;letter-spacing:-1.0px;color:#b0b0b0;white-space:pre;">    checkApproverPK.pubKey[0] &lt;== ApproverPublicKey[0];</div><div style="position:absolute;left:0;top:103px;height:6px;line-height:6px;font-family:'Liberation Mono', monospace;font-size:5px;font-weight:700;letter-spacing:-1.0px;color:#b0b0b0;white-space:pre;">    checkApproverPK.pubKey[1] &lt;== ApproverPublicKey[1];</div><div style="position:absolute;left:0;top:111px;height:6px;line-height:6px;font-family:'Liberation Mono', monospace;font-size:5px;font-weight:700;letter-spacing:-1.0px;color:#b0b0b0;white-space:pre;">    // 2. Verify the allowance can be decrypted (proves ownership of the approval)</div><div style="position:absolute;left:0;top:115px;height:6px;line-height:6px;font-family:'Liberation Mono', monospace;font-size:5px;font-weight:700;letter-spacing:-1.0px;color:#b0b0b0;white-space:pre;">    // The spender&#x27;s public key was used for encryption, but the approver</div><div style="position:absolute;left:0;top:119px;height:6px;line-height:6px;font-family:'Liberation Mono', monospace;font-size:5px;font-weight:700;letter-spacing:-1.0px;color:#b0b0b0;white-space:pre;">    // created it, so we verify the structure matches</div><div style="position:absolute;left:0;top:123px;height:6px;line-height:6px;font-family:'Liberation Mono', monospace;font-size:5px;font-weight:700;letter-spacing:-1.0px;color:#b0b0b0;white-space:pre;">    component checkPoint1 = BabyCheck();</div><div style="position:absolute;left:0;top:127px;height:6px;line-height:6px;font-family:'Liberation Mono', monospace;font-size:5px;font-weight:700;letter-spacing:-1.0px;color:#b0b0b0;white-space:pre;">    checkPoint1.x &lt;== AllowanceC1[0];</div><div style="position:absolute;left:0;top:131px;height:6px;line-height:6px;font-family:'Liberation Mono', monospace;font-size:5px;font-weight:700;letter-spacing:-1.0px;color:#b0b0b0;white-space:pre;">    checkPoint1.y &lt;== AllowanceC1[1];</div><div style="position:absolute;left:0;top:139px;height:6px;line-height:6px;font-family:'Liberation Mono', monospace;font-size:5px;font-weight:700;letter-spacing:-1.0px;color:#b0b0b0;white-space:pre;">    component checkPoint2 = BabyCheck();</div><div style="position:absolute;left:0;top:143px;height:6px;line-height:6px;font-family:'Liberation Mono', monospace;font-size:5px;font-weight:700;letter-spacing:-1.0px;color:#b0b0b0;white-space:pre;">    checkPoint2.x &lt;== AllowanceC2[0];</div><div style="position:absolute;left:0;top:147px;height:6px;line-height:6px;font-family:'Liberation Mono', monospace;font-size:5px;font-weight:700;letter-spacing:-1.0px;color:#b0b0b0;white-space:pre;">    checkPoint2.y &lt;== AllowanceC2[1];</div><div style="position:absolute;left:0;top:151px;height:6px;line-height:6px;font-family:'Liberation Mono', monospace;font-size:5px;font-weight:700;letter-spacing:-1.0px;color:#b0b0b0;white-space:pre;">}</div><div style="position:absolute;left:0;top:159px;height:6px;line-height:6px;font-family:'Liberation Mono', monospace;font-size:5px;font-weight:700;letter-spacing:-1.0px;color:#b0b0b0;white-space:pre;">component main { public [</div><div style="position:absolute;left:0;top:163px;height:6px;line-height:6px;font-family:'Liberation Mono', monospace;font-size:5px;font-weight:700;letter-spacing:-1.0px;color:#b0b0b0;white-space:pre;">    ApproverPublicKey, SpenderPublicKey,</div><div style="position:absolute;left:0;top:167px;height:6px;line-height:6px;font-family:'Liberation Mono', monospace;font-size:5px;font-weight:700;letter-spacing:-1.0px;color:#b0b0b0;white-space:pre;">    AllowanceC1, AllowanceC2</div><div style="position:absolute;left:0;top:171px;height:6px;line-height:6px;font-family:'Liberation Mono', monospace;font-size:5px;font-weight:700;letter-spacing:-1.0px;color:#b0b0b0;white-space:pre;">]} = CancelAllowanceCircuit();</div></div>
<div style="position:absolute;left:3392px;top:252px;width:26px;height:626px;background:#3a3a3a;"></div>
<div style="position:absolute;left:3392px;top:333px;width:26px;height:4px;background:#5a5a5a;"></div>
<div style="position:absolute;left:3402px;top:337px;width:9px;height:14px;background:#8a8a8a;"></div>
<div style="position:absolute;left:3402px;top:434px;width:9px;height:17px;background:#8a8a8a;"></div>
<div style="position:absolute;left:3402px;top:966px;width:9px;height:17px;background:#8a8a8a;"></div>
<div style="position:absolute;left:3391px;top:252px;width:1px;height:1359px;background:#2a2a2a;"></div>
<div style="position:absolute;left:1218px;top:1624px;width:130px;height:44px;border-radius:8px;background:#2c2c2c"></div>
<div style="position:absolute;left:723px;top:1630.0px;height:32px;line-height:32px;font-size:25px;color:#9d9d9d;font-weight:400;letter-spacing:0.75px;white-space:pre;-webkit-text-stroke:0.3px currentColor;">Problems</div>
<div style="position:absolute;left:880px;top:1630.0px;height:32px;line-height:32px;font-size:25px;color:#9d9d9d;font-weight:400;letter-spacing:0.75px;white-space:pre;-webkit-text-stroke:0.3px currentColor;">Output</div>
<div style="position:absolute;left:1009px;top:1630.0px;height:32px;line-height:32px;font-size:25px;color:#9d9d9d;font-weight:400;letter-spacing:0.75px;white-space:pre;-webkit-text-stroke:0.3px currentColor;">Debug Console</div>
<div style="position:absolute;left:1233px;top:1630.0px;height:32px;line-height:32px;font-size:25px;color:#ffffff;font-weight:400;letter-spacing:0.75px;white-space:pre;-webkit-text-stroke:0.9px currentColor;">Terminal</div>
<div style="position:absolute;left:1379px;top:1630.0px;height:32px;line-height:32px;font-size:25px;color:#9d9d9d;font-weight:400;letter-spacing:0.75px;white-space:pre;-webkit-text-stroke:0.3px currentColor;">Ports</div>
<svg style="position:absolute;left:2896px;top:1633px;" width="29" height="29" viewBox="0 0 29 29" fill="none"><rect x="1.2" y="1.2" width="26.6" height="26.6" rx="4" stroke="#cccccc" stroke-width="2.2"/><path d="M6.5 8.5 L12 14 L6.5 19.5 M14 20.5 H22" stroke="#cccccc" stroke-width="2.2"/></svg>
<div style="position:absolute;left:2934px;top:1630.5px;height:31px;line-height:31px;font-size:24px;color:#cccccc;font-weight:400;letter-spacing:0.2px;white-space:pre;-webkit-text-stroke:0.3px currentColor;">zsh</div>
<svg style="position:absolute;left:2995px;top:1633px;" width="28" height="28" viewBox="0 0 28 28" fill="none"><path d="M14 1V27M1 14H27" stroke="#cccccc" stroke-width="2.2"/></svg>
<svg style="position:absolute;left:3033px;top:1642px;" width="18" height="11" viewBox="0 0 18 11" fill="none"><polyline points="1,1 9,9 17,1" stroke="#cccccc" stroke-width="2"/></svg>
<div style="position:absolute;left:3073px;top:1627.5px;height:39px;line-height:39px;font-size:30px;color:#cccccc;font-weight:400;letter-spacing:0px;white-space:pre;-webkit-text-stroke:0.3px currentColor;">@</div>
<svg style="position:absolute;left:3127px;top:1632px;" width="28" height="29" viewBox="0 0 28 29" fill="none"><rect x="1.2" y="1.2" width="25.6" height="26.6" rx="3" stroke="#cccccc" stroke-width="2.2"/><line x1="14" y1="1" x2="14" y2="28" stroke="#cccccc" stroke-width="2.2"/></svg>
<svg style="position:absolute;left:3179px;top:1632px;" width="24" height="29" viewBox="0 0 24 29" fill="none"><path d="M1 6H23M8 6V2H16V6M4 6L5.5 27H18.5L20 6M9 10V23M12 10V23M15 10V23" stroke="#cccccc" stroke-width="2"/></svg>
<div style="position:absolute;left:3232px;top:1645px;width:5px;height:5px;border-radius:50%;background:#cccccc"></div>
<div style="position:absolute;left:3242px;top:1645px;width:5px;height:5px;border-radius:50%;background:#cccccc"></div>
<div style="position:absolute;left:3252px;top:1645px;width:5px;height:5px;border-radius:50%;background:#cccccc"></div>
<div style="position:absolute;left:3282px;top:1630px;width:2px;height:32px;background:#555555;"></div>
<svg style="position:absolute;left:3307px;top:1633px;" width="30" height="28" viewBox="0 0 30 28" fill="none"><path d="M1 8V1H8M22 1H29V8M29 20V27H22M8 27H1V20" stroke="#cccccc" stroke-width="2"/><rect x="6.5" y="8.5" width="17" height="11" stroke="#cccccc" stroke-width="3"/></svg>
<svg style="position:absolute;left:3364px;top:1637px;" width="20" height="20" viewBox="0 0 20 20" fill="none"><path d="M1 1L19 19M19 1L1 19" stroke="#cccccc" stroke-width="2"/></svg>
<div style="position:absolute;left:724.5px;top:1704px;height:28px;line-height:28px;font-family:'Liberation Mono', monospace;font-size:23.33px;color:#cccccc;white-space:pre;transform:translateY(1.8px) scaleY(1.16);transform-origin:0 20.2px;-webkit-text-stroke:0.3px currentColor;">Saved working directory and index state WIP on main: 2eebc80 feat: add end-to-end ZEX swap test and update verifier interfaces and types</div>
<div style="position:absolute;left:724.5px;top:1732px;height:28px;line-height:28px;font-family:'Liberation Mono', monospace;font-size:23.33px;color:#cccccc;white-space:pre;transform:translateY(1.8px) scaleY(1.16);transform-origin:0 20.2px;-webkit-text-stroke:0.3px currentColor;">gautam@Gautams-MacBook-Air-4 EncryptedERC-1 % git checkout demo</div>
<div style="position:absolute;left:724.5px;top:1760px;height:28px;line-height:28px;font-family:'Liberation Mono', monospace;font-size:23.33px;color:#cccccc;white-space:pre;transform:translateY(1.8px) scaleY(1.16);transform-origin:0 20.2px;-webkit-text-stroke:0.3px currentColor;">branch &#x27;demo&#x27; set up to track &#x27;origin/demo&#x27;.</div>
<div style="position:absolute;left:724.5px;top:1788px;height:28px;line-height:28px;font-family:'Liberation Mono', monospace;font-size:23.33px;color:#cccccc;white-space:pre;transform:translateY(1.8px) scaleY(1.16);transform-origin:0 20.2px;-webkit-text-stroke:0.3px currentColor;">Switched to a new branch &#x27;demo&#x27;</div>
<div style="position:absolute;left:724.5px;top:1816px;height:28px;line-height:28px;font-family:'Liberation Mono', monospace;font-size:23.33px;color:#cccccc;white-space:pre;transform:translateY(1.8px) scaleY(1.16);transform-origin:0 20.2px;-webkit-text-stroke:0.3px currentColor;">gautam@Gautams-MacBook-Air-4 EncryptedERC-1 % git pull</div>
<div style="position:absolute;left:724.5px;top:1844px;height:28px;line-height:28px;font-family:'Liberation Mono', monospace;font-size:23.33px;color:#cccccc;white-space:pre;transform:translateY(1.8px) scaleY(1.16);transform-origin:0 20.2px;-webkit-text-stroke:0.3px currentColor;">Already up to date.</div>
<div style="position:absolute;left:724.5px;top:1872px;height:28px;line-height:28px;font-family:'Liberation Mono', monospace;font-size:23.33px;color:#cccccc;white-space:pre;transform:translateY(1.8px) scaleY(1.16);transform-origin:0 20.2px;-webkit-text-stroke:0.3px currentColor;">gautam@Gautams-MacBook-Air-4 EncryptedERC-1 % </div>
<div style="position:absolute;left:724.5px;top:1956px;height:28px;line-height:28px;font-family:'Liberation Mono', monospace;font-size:23.33px;color:#cccccc;white-space:pre;transform:translateY(1.8px) scaleY(1.16);transform-origin:0 20.2px;-webkit-text-stroke:0.3px currentColor;">gautam@Gautams-MacBook-Air-4 EncryptedERC-1 % git pill</div>
<div style="position:absolute;left:724.5px;top:1984px;height:28px;line-height:28px;font-family:'Liberation Mono', monospace;font-size:23.33px;color:#cccccc;white-space:pre;transform:translateY(1.8px) scaleY(1.16);transform-origin:0 20.2px;-webkit-text-stroke:0.3px currentColor;">git: &#x27;pill&#x27; is not a git command. See &#x27;git --help&#x27;.</div>
<div style="position:absolute;left:724.5px;top:2040px;height:28px;line-height:28px;font-family:'Liberation Mono', monospace;font-size:23.33px;color:#cccccc;white-space:pre;transform:translateY(1.8px) scaleY(1.16);transform-origin:0 20.2px;-webkit-text-stroke:0.3px currentColor;">The most similar command is</div>
<div style="position:absolute;left:724.5px;top:2068px;height:28px;line-height:28px;font-family:'Liberation Mono', monospace;font-size:23.33px;color:#cccccc;white-space:pre;transform:translateY(1.8px) scaleY(1.16);transform-origin:0 20.2px;-webkit-text-stroke:0.3px currentColor;">        pull</div>
<div style="position:absolute;left:724.5px;top:2096px;height:28px;line-height:28px;font-family:'Liberation Mono', monospace;font-size:23.33px;color:#cccccc;white-space:pre;transform:translateY(1.8px) scaleY(1.16);transform-origin:0 20.2px;-webkit-text-stroke:0.3px currentColor;">gautam@Gautams-MacBook-Air-4 EncryptedERC-1 % git pull</div>
<div style="position:absolute;left:724.5px;top:2124px;height:28px;line-height:28px;font-family:'Liberation Mono', monospace;font-size:23.33px;color:#cccccc;white-space:pre;transform:translateY(1.8px) scaleY(1.16);transform-origin:0 20.2px;-webkit-text-stroke:0.3px currentColor;">Already up to date.</div>
<div style="position:absolute;left:724.5px;top:2152px;height:28px;line-height:28px;font-family:'Liberation Mono', monospace;font-size:23.33px;color:#cccccc;white-space:pre;transform:translateY(1.8px) scaleY(1.16);transform-origin:0 20.2px;-webkit-text-stroke:0.3px currentColor;">gautam@Gautams-MacBook-Air-4 EncryptedERC-1 % </div>
<div style="position:absolute;left:723.5px;top:1900px;width:42.0px;height:28px;background:#d4d4d4;"></div>
<div style="position:absolute;left:765.5px;top:1900px;width:252.0px;height:28px;background:#4d8ee8;"></div>
<div style="position:absolute;left:724.5px;top:1900px;height:28px;line-height:28px;font-family:'Liberation Mono', monospace;font-size:23.33px;color:#1e1e1e;white-space:pre;transform:translateY(1.8px) scaleY(1.16);transform-origin:0 20.2px;-webkit-text-stroke:0.3px currentColor;"> <span style="display:inline-block;transform:translateY(7.5px) scale(1.4,1.3);">*</span>  History restored</div>
<svg style="position:absolute;left:697px;top:1962px" width="17" height="17" viewBox="0 0 17 17"><circle cx="8.5" cy="8.5" r="6.8" stroke="#f14c4c" stroke-width="2" fill="none"/><path d="M5.8 5.8L11.2 11.2M11.2 5.8L5.8 11.2" stroke="#f14c4c" stroke-width="2"/></svg>
<div style="position:absolute;left:697px;top:2102px;width:16px;height:16px;border-radius:50%;background:#3f86c0"></div>
<div style="position:absolute;left:697px;top:2158px;width:16px;height:16px;border-radius:50%;border:2px solid #6a6a6a"></div>
<div style="position:absolute;left:1368.5px;top:2153px;width:14px;height:26px;border:2px solid #cccccc"></div>
<div style="position:absolute;left:3392px;top:1704px;width:1px;height:476px;background:#444444;"></div>
<div style="position:absolute;left:3392px;top:1704px;width:26px;height:1px;background:#444444;"></div>
<div style="position:absolute;left:3411px;top:2031px;width:7px;height:23px;background:#e05d5d;"></div>
<div style="position:absolute;left:3393px;top:2116px;width:9px;height:23px;background:#3f86c0;"></div>
<div style="position:absolute;left:3393px;top:2150px;width:9px;height:23px;background:#5e5e5e;"></div>
<svg style="position:absolute;left:20px;top:2189px;" width="26" height="26" viewBox="0 0 26 26" fill="none"><path d="M5.4 8 L14 16 L5.4 23.7 M22.3 1 L14.2 9 L22.3 16.7" stroke="#ffffff" stroke-width="2"/></svg>
<svg style="position:absolute;left:84px;top:2192px;" width="20" height="24" viewBox="0 0 20 24" fill="none"><circle cx="5" cy="4" r="3" stroke="#fff" stroke-width="2"/><circle cx="5" cy="20" r="3" stroke="#fff" stroke-width="2"/><circle cx="15" cy="8" r="3" stroke="#fff" stroke-width="2"/><path d="M5 7V17 M15 11 Q15 15 6 17" stroke="#fff" stroke-width="2"/></svg>
<div style="position:absolute;left:118px;top:2187.0px;height:32px;line-height:32px;font-size:25px;color:#ffffff;font-weight:400;letter-spacing:0.3px;white-space:pre;-webkit-text-stroke:0.3px currentColor;">demo*</div>
<svg style="position:absolute;left:205px;top:2190px;" width="28" height="26" viewBox="0 0 28 26" fill="none"><path d="M4 13 A10 10 0 0 1 22 7 M24 13 A10 10 0 0 1 6 19" stroke="#fff" stroke-width="2.2"/><path d="M22 2 V8 H16 M6 24 V18 H12" stroke="#fff" stroke-width="2.2"/></svg>
<svg style="position:absolute;left:266px;top:2189px;" width="26" height="26" viewBox="0 0 26 26" fill="none"><circle cx="13" cy="13" r="11" stroke="#fff" stroke-width="2.2"/><path d="M8.5 8.5L17.5 17.5M17.5 8.5L8.5 17.5" stroke="#fff" stroke-width="2.2"/></svg>
<div style="position:absolute;left:299px;top:2187.0px;height:32px;line-height:32px;font-size:25px;color:#ffffff;font-weight:400;letter-spacing:0px;white-space:pre;-webkit-text-stroke:0.3px currentColor;">0</div>
<svg style="position:absolute;left:323px;top:2189px;" width="26" height="25" viewBox="0 0 26 25" fill="none"><path d="M13 2 L24.5 23 H1.5 Z" stroke="#fff" stroke-width="2.2" stroke-linejoin="round"/><path d="M13 9V16M13 18.5V20.5" stroke="#fff" stroke-width="2.2"/></svg>
<div style="position:absolute;left:356px;top:2187.0px;height:32px;line-height:32px;font-size:25px;color:#ffffff;font-weight:400;letter-spacing:0px;white-space:pre;-webkit-text-stroke:0.3px currentColor;">0</div>
<svg style="position:absolute;left:1783px;top:2189px;" width="12" height="26" viewBox="0 0 12 26" fill="none"><circle cx="6" cy="13" r="4.5" stroke="#fff" stroke-width="2.2"/><path d="M6 0V8.5M6 17.5V26" stroke="#fff" stroke-width="2.2"/></svg>
<div style="position:absolute;left:1812px;top:2187.0px;height:32px;line-height:32px;font-size:25px;color:#ffffff;font-weight:400;letter-spacing:0.35px;white-space:pre;-webkit-text-stroke:0.3px currentColor;">whoisgautxm (2 weeks ago)</div>
<div style="position:absolute;left:2159px;top:2187.0px;height:32px;line-height:32px;font-size:25px;color:#ffffff;font-weight:400;letter-spacing:0.35px;white-space:pre;-webkit-text-stroke:0.3px currentColor;">Ln 6, Col 20 (16 selected)</div>
<div style="position:absolute;left:2488px;top:2187.0px;height:32px;line-height:32px;font-size:25px;color:#ffffff;font-weight:400;letter-spacing:0.35px;white-space:pre;-webkit-text-stroke:0.3px currentColor;">Spaces: 4</div>
<div style="position:absolute;left:2632px;top:2187.0px;height:32px;line-height:32px;font-size:25px;color:#ffffff;font-weight:400;letter-spacing:0.35px;white-space:pre;-webkit-text-stroke:0.3px currentColor;">UTF-8</div>
<div style="position:absolute;left:2737px;top:2187.0px;height:32px;line-height:32px;font-size:25px;color:#ffffff;font-weight:400;letter-spacing:0.35px;white-space:pre;-webkit-text-stroke:0.3px currentColor;">LF</div>
<div style="position:absolute;left:2796px;top:2187.0px;height:32px;line-height:32px;font-size:25px;color:#ffffff;font-weight:400;letter-spacing:0.35px;white-space:pre;-webkit-text-stroke:0.3px currentColor;">Plain Text</div>
<div style="position:absolute;left:2972px;top:2187.0px;height:32px;line-height:32px;font-size:25px;color:#ffffff;font-weight:400;letter-spacing:0.35px;white-space:pre;-webkit-text-stroke:0.3px currentColor;">Go Live</div>
<div style="position:absolute;left:3089px;top:2187.0px;height:32px;line-height:32px;font-size:25px;color:#ffffff;font-weight:400;letter-spacing:0.35px;white-space:pre;-webkit-text-stroke:0.3px currentColor;">Antigravity - Settings</div>
<svg style="position:absolute;left:2941px;top:2190px;" width="22" height="26" viewBox="0 0 22 26" fill="none"><path d="M4 18 A9.5 9.5 0 1 1 18 18 M7.5 14.5 A5 5 0 1 1 14.5 14.5" stroke="#fff" stroke-width="2.2"/><circle cx="11" cy="11" r="2" fill="#fff"/><path d="M11 13V25" stroke="#fff" stroke-width="2.6"/></svg>
<svg style="position:absolute;left:3364px;top:2189px;" width="24" height="27" viewBox="0 0 24 27" fill="none"><path d="M12 2 A7.5 7.5 0 0 1 19.5 9.5 V15 L22 20 H2 L4.5 15 V9.5 A7.5 7.5 0 0 1 12 2 Z" stroke="#fff" stroke-width="2" stroke-linejoin="round"/><path d="M9 22 A3 3 0 0 0 15 22" stroke="#fff" stroke-width="2"/></svg>
<div style="position:absolute;left:2438px;top:98.5px;height:31px;line-height:31px;font-size:24px;color:#cccccc;font-weight:400;letter-spacing:0.65px;white-space:pre;-webkit-text-stroke:0.3px currentColor;">Open Agent Manager</div>
<svg style="position:absolute;left:2694px;top:99px;" width="28" height="30" viewBox="0 0 28 30" fill="none"><rect x="1.2" y="1.2" width="10.6" height="27.6" rx="2.5" stroke="#ccc" stroke-width="2.2"/><rect x="16.2" y="1.2" width="10.6" height="11" rx="2.5" stroke="#ccc" stroke-width="2.2"/><rect x="16.2" y="17.8" width="10.6" height="11" rx="2.5" stroke="#ccc" stroke-width="2.2"/></svg>
<svg style="position:absolute;left:2740px;top:99px;" width="30" height="30" viewBox="0 0 30 30" fill="none"><rect x="1.2" y="1.2" width="27.6" height="27.6" rx="3" stroke="#ccc" stroke-width="2.2"/><rect x="1.2" y="1.2" width="11" height="27.6" fill="#ccc"/></svg>
<svg style="position:absolute;left:2788px;top:99px;" width="30" height="30" viewBox="0 0 30 30" fill="none"><rect x="1.2" y="1.2" width="27.6" height="27.6" rx="3" stroke="#ccc" stroke-width="2.2"/><rect x="1.2" y="17" width="27.6" height="11.8" fill="#ccc"/></svg>
<svg style="position:absolute;left:2836px;top:99px;" width="30" height="30" viewBox="0 0 30 30" fill="none"><rect x="1.2" y="1.2" width="27.6" height="27.6" rx="3" stroke="#ccc" stroke-width="2.2"/><line x1="15" y1="1" x2="15" y2="29" stroke="#ccc" stroke-width="2.2"/></svg>
<svg style="position:absolute;left:2884px;top:98px;" width="31" height="32" viewBox="0 0 31 32" fill="none"><circle cx="19" cy="12" r="10" stroke="#ccc" stroke-width="2.2"/><path d="M12 19 L1.5 30" stroke="#ccc" stroke-width="2.4"/></svg>
<div style="position:absolute;left:2933px;top:101px;width:2px;height:26px;background:#5a5a5a;"></div>
<svg style="position:absolute;left:2951px;top:100px;" width="29" height="29" viewBox="0 0 29 29" fill="none"><circle cx="14.5" cy="14.5" r="13" fill="#ccc"/><circle cx="14.5" cy="14.5" r="6" fill="#3c3c3c"/><circle cx="14.5" cy="14.5" r="4" fill="#ccc"/><path d="M14.5 8.5 H27 M9.3 17.5 L3 6.5 M19.7 17.5 L13.5 28" stroke="#3c3c3c" stroke-width="2"/></svg>
<svg style="position:absolute;left:2998px;top:99px;" width="30" height="30" viewBox="0 0 30 30" fill="none"><path d="M12.5 1.5H17.5L18.3 5.3L21.3 7L25 5.8L27.5 10.1L24.6 12.7V16.3L27.5 18.9L25 23.2L21.3 22L18.3 23.7L17.5 27.5H12.5L11.7 23.7L8.7 22L5 23.2L2.5 18.9L5.4 16.3V12.7L2.5 10.1L5 5.8L8.7 7L11.7 5.3Z" stroke="#ccc" stroke-width="2" stroke-linejoin="round"/><circle cx="15" cy="14.5" r="4.5" stroke="#ccc" stroke-width="2"/></svg>
<svg style="position:absolute;left:3051px;top:97px;" width="32" height="32" viewBox="0 0 32 32" fill="none"><defs><clipPath id="av"><circle cx="16" cy="16" r="16"/></clipPath></defs><g clip-path="url(#av)"><rect width="32" height="32" fill="#5e3124"/><rect x="21" y="0" width="11" height="32" fill="#7d6f4a"/><rect x="24" y="2" width="1.5" height="30" fill="#3a3020"/><rect x="21" y="16" width="11" height="16" fill="#6a5a30"/><circle cx="26" cy="22" r="3" fill="#c8642a"/><circle cx="28" cy="27" r="2.5" fill="#d0702a"/><ellipse cx="13.5" cy="8" rx="3.6" ry="4.2" fill="#b07a5a"/><path d="M9.8 6.5 Q13.5 1.5 17.2 6.5 Q15 4.8 13.5 5 Q11.5 5 9.8 6.5Z" fill="#1e1a18"/><path d="M6 32 L8 16 Q13 12 20 15 L23 32 Z" fill="#5a6ea0"/><path d="M11 15 L14 26 L17 15 Z" fill="#2a3050"/><rect x="13" y="28" width="8" height="3" fill="#e0c0a0"/></g></svg>
<div style="position:absolute;left:3043px;top:111px;width:24px;height:24px;border-radius:7px;background:#3579d0;color:#fff;font-size:18px;font-weight:700;text-align:center;line-height:24px;">1</div>
<svg style="position:absolute;left:3092px;top:107px;" width="20" height="12" viewBox="0 0 20 12" fill="none"><polyline points="1,1 10,10 19,1" stroke="#ccc" stroke-width="2"/></svg>
<div style="position:absolute;left:3149px;top:89px;width:255px;height:48px;border-radius:24px;background:#2e619c"></div>
<div style="position:absolute;left:3173px;top:98.5px;height:29px;line-height:29px;font-size:22.5px;color:#ffffff;font-weight:700;letter-spacing:0px;white-space:pre;">Restart to Update</div>
<svg style="position:absolute;left:3365px;top:104px;" width="19" height="18" viewBox="0 0 19 18" fill="none"><path d="M1 9H17M9.5 1.5L17 9L9.5 16.5" stroke="#fff" stroke-width="2.6"/></svg>
<div style="position:absolute;left:12px;top:160px;width:60px;height:60px;border-radius:8px;background:#3f4040"></div>
<svg style="position:absolute;left:22px;top:168px;" width="40" height="44" viewBox="0 0 40 44" fill="none"><path d="M14 5.5 Q14 3.5 16 3.5 H27.5 L35.5 11.5 V28.5 Q35.5 30.5 33.5 30.5 H16 Q14 30.5 14 28.5 Z" stroke="#fff" stroke-width="2.4" stroke-linejoin="round"/><path d="M27 3.5 L35.5 12 H27 Z" fill="#fff"/><path d="M14 14 H6.5 Q4.5 14 4.5 16 V37 Q4.5 39 6.5 39 H24 Q26 39 26 37 V30.5" stroke="#fff" stroke-width="2.4" stroke-linejoin="round"/></svg>
<svg style="position:absolute;left:25px;top:256px;" width="34" height="36" viewBox="0 0 34 36" fill="none"><circle cx="20" cy="13" r="11" stroke="#8f8f8f" stroke-width="2.4"/><path d="M12.5 21 L2 33" stroke="#8f8f8f" stroke-width="2.6"/></svg>
<svg style="position:absolute;left:26px;top:338px;" width="34" height="40" viewBox="0 0 34 40" fill="none"><circle cx="7" cy="5.5" r="4.5" stroke="#8f8f8f" stroke-width="2.2"/><circle cx="7" cy="32" r="4.5" stroke="#8f8f8f" stroke-width="2.2"/><circle cx="22" cy="14" r="4.5" stroke="#8f8f8f" stroke-width="2.2"/><path d="M7 10V27.5M22 18.5 Q22 26 9 29" stroke="#8f8f8f" stroke-width="2.2"/></svg>
<div style="position:absolute;left:44px;top:361px;width:24px;height:23px;border-radius:6px;background:#3b7fd1;color:#fff;font-size:18px;font-weight:700;text-align:center;line-height:23px;">1</div>
<svg style="position:absolute;left:22px;top:420px;" width="42" height="42" viewBox="0 0 42 42" fill="none"><path d="M15 4.5 L37.5 17 L20 27" stroke="#8f8f8f" stroke-width="2.2" stroke-linejoin="round"/><path d="M15 4.5 V17" stroke="#8f8f8f" stroke-width="2.2"/><ellipse cx="10.5" cy="29" rx="6" ry="7.5" stroke="#8f8f8f" stroke-width="2.2"/><path d="M6 23 Q10.5 18.5 15 23" stroke="#8f8f8f" stroke-width="2.2"/><path d="M1.5 29 H5M16 29 H19.5M2.5 21.5 L6 24.5M18.5 21.5 L15 24.5M2.5 37 L6 34M18.5 37 L15 34" stroke="#8f8f8f" stroke-width="2"/></svg>
<svg style="position:absolute;left:24px;top:508px;" width="40" height="36" viewBox="0 0 40 36" fill="none"><path d="M14 26 H4 Q2 26 2 24 V4 Q2 2 4 2 H30 Q32 2 32 4 V14" stroke="#8f8f8f" stroke-width="2.2"/><path d="M9 31H16" stroke="#8f8f8f" stroke-width="2.2"/><circle cx="28" cy="27" r="8.5" stroke="#8f8f8f" stroke-width="2.2"/><path d="M24.5 29L27 26.5L24.5 24M32 25L29.5 27.5L32 30" stroke="#8f8f8f" stroke-width="1.6"/></svg>
<svg style="position:absolute;left:26px;top:592px;" width="36" height="36" viewBox="0 0 36 36" fill="none"><rect x="2.5" y="5" width="14" height="14" stroke="#8f8f8f" stroke-width="2.2"/><rect x="2.5" y="19" width="14" height="14" stroke="#8f8f8f" stroke-width="2.2"/><rect x="16.5" y="19" width="14" height="14" stroke="#8f8f8f" stroke-width="2.2"/><path d="M25 2.5 L33 10.5 L25 18.5 L17 10.5 Z" stroke="#8f8f8f" stroke-width="2.2" stroke-linejoin="round"/></svg>
<div style="position:absolute;left:44px;top:612px;width:24px;height:24px;border-radius:6px;background:#3b7fd1;color:#fff;font-size:18px;font-weight:700;text-align:center;line-height:24px;">6</div>
<svg style="position:absolute;left:24px;top:675px;" width="36" height="36" viewBox="0 0 36 36" fill="none"><rect x="2" y="2" width="14" height="13" rx="2" stroke="#8f8f8f" stroke-width="2.2"/><rect x="19" y="20" width="15" height="14" rx="2" stroke="#8f8f8f" stroke-width="2.2"/><path d="M9 15 V27 H19" stroke="#8f8f8f" stroke-width="2.2"/></svg>
<div style="position:absolute;left:0;top:77px;width:3419px;height:2147px;border-radius:22px;border:2px solid rgba(255,255,255,0.24);"></div>
</div>
<svg style="position:absolute;left:2557px;top:20px;" width="34" height="38" viewBox="0 0 34 38" fill="none"><path d="M1.2 37 L5.8 23.4 Q17 31 28.8 23.4 L33 37 Z" fill="#eef2f7"/><path d="M14.3 1.2 Q17 -0.2 19.8 1.2 L25.6 24.5 Q17 31 8.4 24.5 Z" fill="#8aa6c6"/><path d="M14.3 1.2 Q17 -0.2 19.8 1.2 L21.1 5.5 Q17 7 12.9 5.5 Z" fill="#eef2f7"/><path d="M11.2 13.6 Q17 16.5 22.8 13.6 L24.5 20.4 Q17 24 9.5 20.4 Z" fill="#eef2f7"/></svg>
<svg style="position:absolute;left:2627px;top:20px;" width="40" height="40" viewBox="0 0 40 40" fill="none"><path d="M1.5 16 Q1 12.6 4.5 12.8 L15.5 13.5 L29.5 25.5 L16.5 36.8 Q15 38.2 13.7 36.5 Z" fill="#eef2f7"/><path d="M4 15.8 L14.5 16.3" stroke="#3d78b4" stroke-width="1.7"/><path d="M16.3 34.2 L27.2 24.8" stroke="#3d78b4" stroke-width="1.7"/><circle cx="27" cy="11" r="11" fill="#3d78b4"/><circle cx="27" cy="11" r="9.8" fill="#eef2f7"/><path d="M23.6 7.6 L30.4 14.4 M30.4 7.6 L23.6 14.4" stroke="#3d78b4" stroke-width="2.2"/></svg>
<svg style="position:absolute;left:2703px;top:22px;" width="34" height="34" viewBox="0 0 34 34" fill="none"><defs><mask id="mm"><rect width="34" height="34" fill="#fff"/><circle cx="27" cy="10" r="12.5" fill="#000"/></mask></defs><circle cx="16" cy="17.5" r="16" fill="#eef2f7" mask="url(#mm)"/><path d="M22.5 9 L29.5 15.5 L25.8 19 V2.5 L29.5 6 L22.5 12.5" stroke="#eef2f7" stroke-width="1.7" fill="none" stroke-linejoin="round"/></svg>
<svg style="position:absolute;left:2772px;top:25px;" width="36" height="28" viewBox="0 0 36 28" fill="none"><path d="M2 9 A22 22 0 0 1 34 9 L30.5 12.5 A17 17 0 0 0 5.5 12.5 Z M8.5 15.8 A13 13 0 0 1 27.5 15.8 L24 19.3 A8 8 0 0 0 12 19.3 Z M15 22.5 A4.5 4.5 0 0 1 21 22.5 L18 26 Z" fill="#eef2f7"/></svg>
<svg style="position:absolute;left:2847px;top:26px;" width="32" height="26" viewBox="0 0 32 26" fill="none"><rect x="1.2" y="1.2" width="29.6" height="23.6" rx="4" stroke="#eef2f7" stroke-width="2.4"/><path d="M6 6H8M10 6H12M14 6H16M6 10H15M6 14H15M6 18H15" stroke="#eef2f7" stroke-width="1.8"/><text x="17" y="20" font-size="11" fill="#eef2f7" font-family="Liberation Sans">⌘</text></svg>
<div style="position:absolute;left:2914px;top:24.5px;height:29px;line-height:29px;font-size:23px;color:#eef2f7;font-weight:400;letter-spacing:0.4px;white-space:pre;-webkit-text-stroke:0.3px currentColor;">72%</div>
<svg style="position:absolute;left:2968px;top:26px;" width="54" height="26" viewBox="0 0 54 26" fill="none"><rect x="1.2" y="1.2" width="45" height="23.6" rx="6" stroke="rgba(238,242,247,0.45)" stroke-width="2.2"/><rect x="5" y="5" width="28" height="16" rx="3" fill="#eef2f7"/><path d="M49.5 9 Q52 13 49.5 17" stroke="rgba(238,242,247,0.45)" stroke-width="2.5"/></svg>
<svg style="position:absolute;left:3064px;top:23px;" width="30" height="31" viewBox="0 0 30 31" fill="none"><rect x="3.2" y="3.2" width="23.6" height="10.8" rx="5.4" stroke="#eef2f7" stroke-width="2.4"/><rect x="5.5" y="5.5" width="10" height="6.2" rx="3.1" fill="#eef2f7"/><rect x="2" y="17" width="26" height="12.5" rx="6.25" fill="#eef2f7"/><rect x="14" y="19.6" width="11" height="7.3" rx="3.65" fill="#3b74ad"/></svg>
<div style="position:absolute;left:3137px;top:21.5px;height:33px;line-height:33px;font-size:26px;color:#eef2f7;font-weight:400;letter-spacing:0.35px;white-space:pre;-webkit-text-stroke:0.3px currentColor;">Thu 15 Jan</div>
<div style="position:absolute;left:3287px;top:21.5px;height:33px;line-height:33px;font-size:26px;color:#eef2f7;font-weight:400;letter-spacing:0.1px;white-space:pre;-webkit-text-stroke:0.3px currentColor;">8:05 PM</div>
</body></html>
